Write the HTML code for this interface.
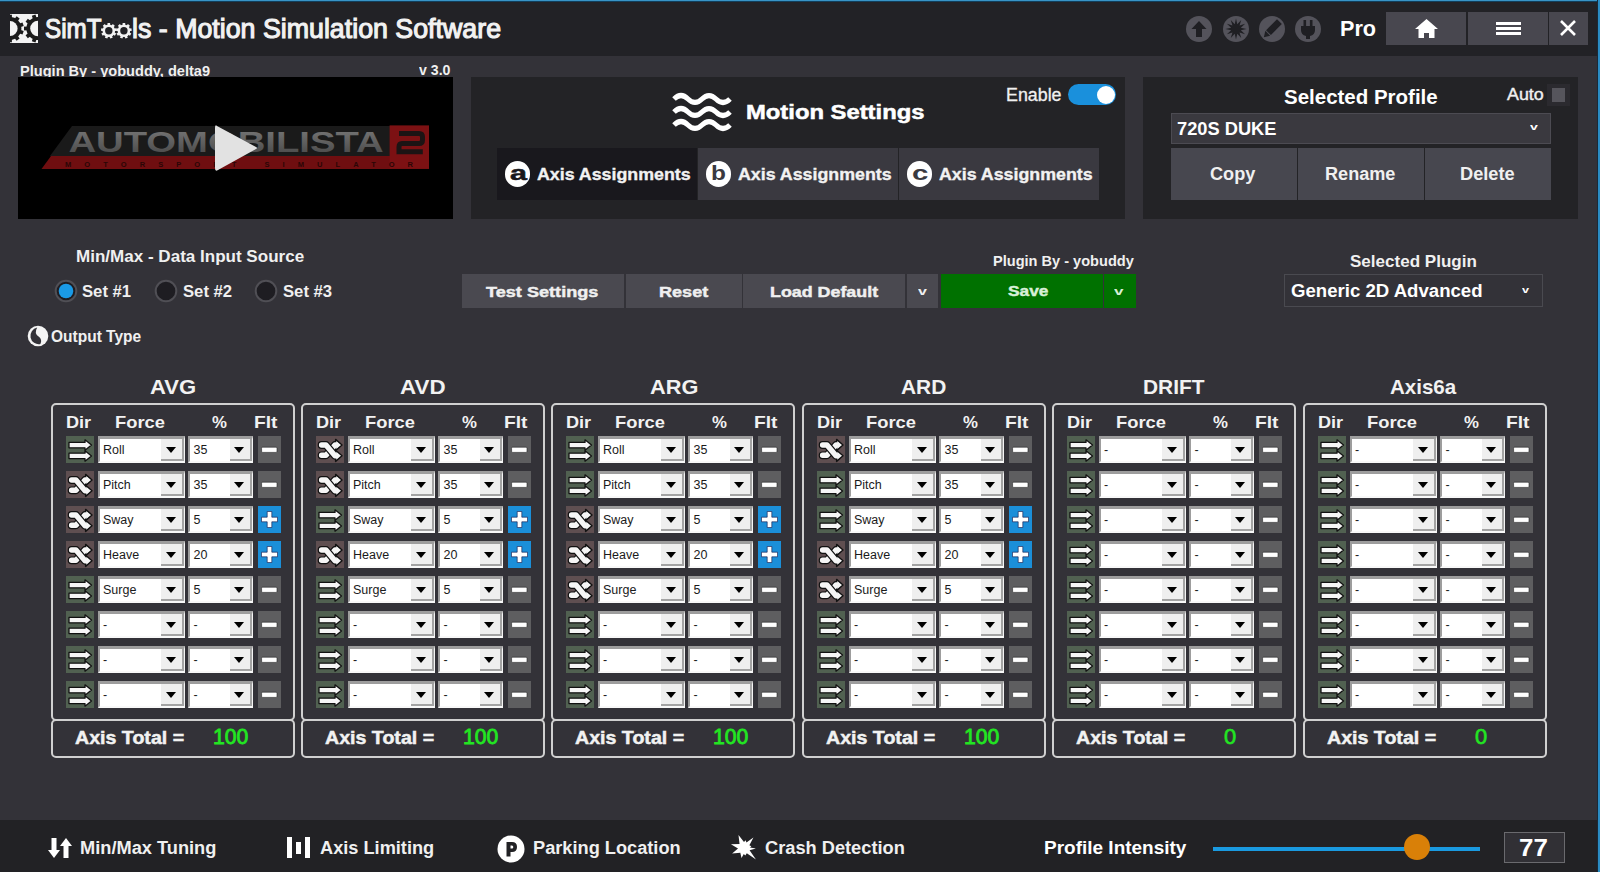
<!DOCTYPE html><html><head><meta charset="utf-8"><style>
*{margin:0;padding:0}
html,body{width:1600px;height:872px;overflow:hidden;background:#333238;font-family:"Liberation Sans", sans-serif}
.t{position:absolute;white-space:nowrap;font-family:"Liberation Sans", sans-serif}
.r{position:absolute;display:block}
.cb{position:absolute;box-sizing:border-box;background:#fff;border-top:3px solid #9d9d9d;border-left:2.5px solid #9d9d9d;border-right:1px solid #f4f4f4;border-bottom:2.5px solid #f8f8f8}
.cbt{position:absolute;left:3.5px;top:4.8px;font-size:12.5px;line-height:13px;color:#1a1a1a;font-family:"Liberation Sans", sans-serif}
.cbb{position:absolute;right:0;top:0;bottom:0;background:#efefef;border-bottom:2.5px solid #a3a3a3;border-right:2.5px solid #a3a3a3;box-sizing:border-box}
.cbb i{position:absolute;left:4.5px;top:7.5px;width:0;height:0;border-left:5px solid transparent;border-right:5px solid transparent;border-top:6px solid #000}
</style></head><body><div class="r" style="left:0px;top:0px;width:1600px;height:56px;background:#222226;"></div><div class="r" style="left:0px;top:0px;width:1600px;height:1px;background:#3894c6;"></div><div class="r" style="left:0px;top:1px;width:1600px;height:1px;background:#123f5c;"></div><svg class="r" style="left:8px;top:12px;" width="32" height="33" viewBox="0 0 32 33">
<defs><clipPath id="lc"><rect x="2" y="2" width="28" height="29"/></clipPath></defs>
<rect x="2" y="2" width="28" height="29" fill="#f4f4f4"/>
<g clip-path="url(#lc)" fill="#1c1c1c">
<circle cx="2" cy="16.5" r="11.4"/>
<circle cx="30" cy="16.5" r="11.6"/>
<g transform="translate(2 16.5)"><rect x="-1.9" y="-13.8" width="3.8" height="4" transform="rotate(0)"/><rect x="-1.9" y="-13.8" width="3.8" height="4" transform="rotate(36)"/><rect x="-1.9" y="-13.8" width="3.8" height="4" transform="rotate(72)"/><rect x="-1.9" y="-13.8" width="3.8" height="4" transform="rotate(108)"/><rect x="-1.9" y="-13.8" width="3.8" height="4" transform="rotate(144)"/><rect x="-1.9" y="-13.8" width="3.8" height="4" transform="rotate(180)"/><rect x="-1.9" y="-13.8" width="3.8" height="4" transform="rotate(216)"/><rect x="-1.9" y="-13.8" width="3.8" height="4" transform="rotate(252)"/><rect x="-1.9" y="-13.8" width="3.8" height="4" transform="rotate(288)"/><rect x="-1.9" y="-13.8" width="3.8" height="4" transform="rotate(324)"/></g>
<g transform="translate(30 16.5)"><rect x="-1.9" y="-14" width="3.8" height="4" transform="rotate(18)"/><rect x="-1.9" y="-14" width="3.8" height="4" transform="rotate(54)"/><rect x="-1.9" y="-14" width="3.8" height="4" transform="rotate(90)"/><rect x="-1.9" y="-14" width="3.8" height="4" transform="rotate(126)"/><rect x="-1.9" y="-14" width="3.8" height="4" transform="rotate(162)"/><rect x="-1.9" y="-14" width="3.8" height="4" transform="rotate(198)"/><rect x="-1.9" y="-14" width="3.8" height="4" transform="rotate(234)"/><rect x="-1.9" y="-14" width="3.8" height="4" transform="rotate(270)"/><rect x="-1.9" y="-14" width="3.8" height="4" transform="rotate(306)"/><rect x="-1.9" y="-14" width="3.8" height="4" transform="rotate(342)"/></g>
</g>
<g clip-path="url(#lc)" fill="#f4f4f4"><circle cx="2" cy="16.5" r="7.6"/><circle cx="30" cy="16.5" r="7.8"/></g>
</svg><div class="t" style="left:45.35px;top:15.64px;font-size:27px;line-height:27px;font-weight:normal;color:#f2f2f2;transform:scaleX(0.8976);transform-origin:0 0;-webkit-text-stroke:1.1px #f2f2f2;">SimT</div><div class="t" style="left:132.11px;top:15.64px;font-size:27px;line-height:27px;font-weight:normal;color:#f2f2f2;transform:scaleX(0.9916);transform-origin:0 0;-webkit-text-stroke:1.1px #f2f2f2;">ls - Motion Simulation Software</div><svg class="r" style="left:101.3px;top:23.1px;" width="31" height="16" viewBox="0 0 31 16"><g transform="translate(7.8 7.8)" fill="#f2f2f2"><rect x="-1.3" y="-7.8" width="2.6" height="3" transform="rotate(0)"/><rect x="-1.3" y="-7.8" width="2.6" height="3" transform="rotate(40)"/><rect x="-1.3" y="-7.8" width="2.6" height="3" transform="rotate(80)"/><rect x="-1.3" y="-7.8" width="2.6" height="3" transform="rotate(120)"/><rect x="-1.3" y="-7.8" width="2.6" height="3" transform="rotate(160)"/><rect x="-1.3" y="-7.8" width="2.6" height="3" transform="rotate(200)"/><rect x="-1.3" y="-7.8" width="2.6" height="3" transform="rotate(240)"/><rect x="-1.3" y="-7.8" width="2.6" height="3" transform="rotate(280)"/><rect x="-1.3" y="-7.8" width="2.6" height="3" transform="rotate(320)"/><circle r="6.3"/></g><circle cx="7.8" cy="7.8" r="3.7" fill="#222226"/><g transform="translate(22.9 7.8)" fill="#f2f2f2"><rect x="-1.3" y="-7.8" width="2.6" height="3" transform="rotate(0)"/><rect x="-1.3" y="-7.8" width="2.6" height="3" transform="rotate(40)"/><rect x="-1.3" y="-7.8" width="2.6" height="3" transform="rotate(80)"/><rect x="-1.3" y="-7.8" width="2.6" height="3" transform="rotate(120)"/><rect x="-1.3" y="-7.8" width="2.6" height="3" transform="rotate(160)"/><rect x="-1.3" y="-7.8" width="2.6" height="3" transform="rotate(200)"/><rect x="-1.3" y="-7.8" width="2.6" height="3" transform="rotate(240)"/><rect x="-1.3" y="-7.8" width="2.6" height="3" transform="rotate(280)"/><rect x="-1.3" y="-7.8" width="2.6" height="3" transform="rotate(320)"/><circle r="6.3"/></g><circle cx="22.9" cy="7.8" r="3.7" fill="#222226"/></svg><div class="r" style="left:1186px;top:15.5px;width:26px;height:26px;border-radius:50%;background:#54535b"></div><div class="r" style="left:1222.5px;top:15.5px;width:26px;height:26px;border-radius:50%;background:#54535b"></div><div class="r" style="left:1259px;top:15.5px;width:26px;height:26px;border-radius:50%;background:#54535b"></div><div class="r" style="left:1295px;top:15.5px;width:26px;height:26px;border-radius:50%;background:#54535b"></div><svg class="r" style="left:1186px;top:15.5px;" width="26" height="26" viewBox="0 0 26 26"><path d="M13 5 L20.5 13 L16 13 L16 21 L10 21 L10 13 L5.5 13 Z" fill="#1f1f23"/></svg><svg class="r" style="left:1222.5px;top:15.5px;" width="26" height="26" viewBox="0 0 26 26"><polygon points="23.50,13.00 17.83,14.29 22.09,18.25 16.54,16.54 18.25,22.09 14.29,17.83 13.00,23.50 11.71,17.83 7.75,22.09 9.46,16.54 3.91,18.25 8.17,14.29 2.50,13.00 8.17,11.71 3.91,7.75 9.46,9.46 7.75,3.91 11.71,8.17 13.00,2.50 14.29,8.17 18.25,3.91 16.54,9.46 22.09,7.75 17.83,11.71" fill="#1f1f23"/></svg><svg class="r" style="left:1259px;top:15.5px;" width="26" height="26" viewBox="0 0 26 26"><g transform="rotate(45 13 13)" fill="#1f1f23"><rect x="9.6" y="2.5" width="6.8" height="15.5"/><path d="M9.6 19 L16.4 19 L13 24.5 Z"/></g></svg><svg class="r" style="left:1295px;top:15.5px;" width="26" height="26" viewBox="0 0 26 26"><rect x="8.5" y="4" width="2.6" height="6" fill="#1f1f23"/><rect x="14.9" y="4" width="2.6" height="6" fill="#1f1f23"/><path d="M6 10 H20 V14 Q20 19 15 20 V23 H11 V20 Q6 19 6 14 Z" fill="#1f1f23"/></svg><div class="t" style="left:1339.62px;top:17.98px;font-size:22px;line-height:22px;font-weight:bold;color:#fff;transform:scaleX(0.9829);transform-origin:0 0;">Pro</div><div class="r" style="left:1386px;top:12px;width:80px;height:33px;background:#48474f;"></div><div class="r" style="left:1468px;top:12px;width:80px;height:33px;background:#48474f;"></div><div class="r" style="left:1549px;top:12px;width:39px;height:33px;background:#48474f;"></div><svg class="r" style="left:1414px;top:18px;" width="25" height="21" viewBox="0 0 25 21"><path d="M12.5 1 L24 11 L20.5 11 L20.5 20 L15 20 L15 15 L10 15 L10 20 L4.5 20 L4.5 11 L1 11 Z" fill="#fff"/></svg><div class="r" style="left:1496px;top:22px;width:25px;height:3px;background:#fff;"></div><div class="r" style="left:1496px;top:27px;width:25px;height:3px;background:#fff;"></div><div class="r" style="left:1496px;top:32px;width:25px;height:3px;background:#fff;"></div><svg class="r" style="left:1558px;top:18px;" width="20" height="20" viewBox="0 0 20 20"><path d="M3 3 L17 17 M17 3 L3 17" stroke="#fff" stroke-width="2.6"/></svg><div class="r" style="left:0px;top:56px;width:1600px;height:764px;background:#333238;"></div><div class="t" style="left:20.46px;top:63.65px;font-size:14px;line-height:14px;font-weight:bold;color:#f0f0f0;transform:scaleX(1.0414);transform-origin:0 0;">Plugin By - yobuddy, delta9</div><div class="t" style="left:419.00px;top:63.45px;font-size:14px;line-height:14px;font-weight:bold;color:#f0f0f0;transform:scaleX(1.0097);transform-origin:0 0;">v 3.0</div><div class="r" style="left:18px;top:76.5px;width:435px;height:142.5px;background:#000;"></div><svg class="r" style="left:38px;top:122px;" width="395" height="52" viewBox="0 0 395 52">
<defs><linearGradient id="lg" x1="0" y1="0" x2="0" y2="1"><stop offset="0" stop-color="#7a7a7a"/><stop offset="1" stop-color="#454545"/></linearGradient></defs>
<path d="M34 4 L352 4 L352 34 L12 34 Z" fill="#1a1a1a"/>
<path d="M13 34 L391 34 L391 47 L3.5 47 Z" fill="#6f0e10"/>
<rect x="351.6" y="3.4" width="39.4" height="43.2" fill="#7c1113"/>
<path d="M361 11.5 H381 Q384.5 11.5 384.5 15 V18 Q384.5 21.5 381 21.5 H364 Q361 21.5 361 25 V29.8 H384.8" fill="none" stroke="#1c1414" stroke-width="5"/>
<text x="30.4" y="30.3" font-family="Liberation Sans" font-weight="bold" font-size="29.5" fill="url(#lg)" textLength="315.3" lengthAdjust="spacingAndGlyphs">AUTOMOBILISTA</text>
<text x="27" y="44.5" font-family="Liberation Sans" font-weight="bold" font-size="7.5" fill="#2a0606" textLength="348" lengthAdjust="spacing">MOTORSPORT  SIMULATOR</text>
</svg><svg class="r" style="left:212px;top:122px;" width="48" height="52" viewBox="0 0 48 52"><path d="M5 4 Q3 2 3 6 L3 46 Q3 50 6 48 L44 27 Q46 26 44 25 Z" fill="#e2e2e2"/></svg><div class="r" style="left:471px;top:76.5px;width:654px;height:142.5px;background:#232326;"></div><svg class="r" style="left:671px;top:92px;overflow:visible" width="60" height="40" viewBox="0 0 60 40"><path d="M3 7 q7 -7 14 0 t14 0 t14 0 t14 0" fill="none" stroke="#fff" stroke-width="5"/><path d="M3 20 q7 -7 14 0 t14 0 t14 0 t14 0" fill="none" stroke="#fff" stroke-width="5"/><path d="M3 33 q7 -7 14 0 t14 0 t14 0 t14 0" fill="none" stroke="#fff" stroke-width="5"/></svg><div class="t" style="left:745.81px;top:101.97px;font-size:20px;line-height:20px;font-weight:bold;color:#fff;transform:scaleX(1.1899);transform-origin:0 0;-webkit-text-stroke:0.5px #fff;">Motion Settings</div><div class="t" style="left:1005.78px;top:87.19px;font-size:17.5px;line-height:17.5px;font-weight:normal;color:#f0f0f0;transform:scaleX(1.0189);transform-origin:0 0;-webkit-text-stroke:0.3px #f0f0f0;">Enable</div><div class="r" style="left:1067.5px;top:84px;width:48.5px;height:21px;background:#1a90dc;border-radius:11px;"></div><div class="r" style="left:1096.5px;top:85.7px;width:18px;height:18px;background:#fff;border-radius:50%;"></div><div class="r" style="left:497px;top:148px;width:200px;height:51.5px;background:#19181d;"></div><div class="r" style="left:698px;top:148px;width:200px;height:51.5px;background:#3a3940;"></div><div class="r" style="left:899px;top:148px;width:200px;height:51.5px;background:#3a3940;"></div><div class="r" style="left:504.90000000000003px;top:161.2px;width:25.6px;height:25.6px;border-radius:50%;background:#fff"></div><div class="t" style="left:509.55px;top:162.02px;font-size:21px;line-height:21px;font-weight:bold;color:#19181d;transform:scaleX(1.4500);transform-origin:0 0;-webkit-text-stroke:0.5px #19181d;">a</div><div class="t" style="left:536.70px;top:165.81px;font-size:17px;line-height:17px;font-weight:bold;color:#f2f2f2;transform:scaleX(1.0466);transform-origin:0 0;-webkit-text-stroke:0.35px #f2f2f2;">Axis Assignments</div><div class="r" style="left:705.9000000000001px;top:161.2px;width:25.6px;height:25.6px;border-radius:50%;background:#fff"></div><div class="t" style="left:711.41px;top:163.35px;font-size:20.5px;line-height:20.5px;font-weight:bold;color:#3a3940;transform:scaleX(1.1909);transform-origin:0 0;">b</div><div class="t" style="left:737.70px;top:165.81px;font-size:17px;line-height:17px;font-weight:bold;color:#f2f2f2;transform:scaleX(1.0466);transform-origin:0 0;-webkit-text-stroke:0.35px #f2f2f2;">Axis Assignments</div><div class="r" style="left:906.9000000000001px;top:161.2px;width:25.6px;height:25.6px;border-radius:50%;background:#fff"></div><div class="t" style="left:911.90px;top:162.02px;font-size:21px;line-height:21px;font-weight:bold;color:#3a3940;transform:scaleX(1.4000);transform-origin:0 0;">c</div><div class="t" style="left:938.70px;top:165.81px;font-size:17px;line-height:17px;font-weight:bold;color:#f2f2f2;transform:scaleX(1.0466);transform-origin:0 0;-webkit-text-stroke:0.35px #f2f2f2;">Axis Assignments</div><div class="r" style="left:1143px;top:77px;width:435px;height:141.5px;background:#232326;"></div><div class="t" style="left:1284.10px;top:87.45px;font-size:20.5px;line-height:20.5px;font-weight:bold;color:#fff;transform:scaleX(0.9993);transform-origin:0 0;">Selected Profile</div><div class="t" style="left:1506.80px;top:86.76px;font-size:16px;line-height:16px;font-weight:normal;color:#f0f0f0;transform:scaleX(1.1152);transform-origin:0 0;-webkit-text-stroke:0.4px #f0f0f0;">Auto</div><div class="r" style="left:1547px;top:83.5px;width:22.5px;height:22.5px;background:#2b2a2f;"></div><div class="r" style="left:1552px;top:88px;width:13px;height:13.5px;background:#56555c;"></div><div class="r" style="left:1170.5px;top:113px;width:380.5px;height:30.5px;background:#3a393f;box-sizing:border-box;border:1px solid #4c4b52;"></div><div class="t" style="left:1177.49px;top:119.66px;font-size:18px;line-height:18px;font-weight:bold;color:#fff;transform:scaleX(1.0144);transform-origin:0 0;">720S DUKE</div><div class="t" style="left:1529.60px;top:123.18px;font-size:9px;line-height:9px;font-weight:bold;color:#fff;transform:scaleX(1.5600);transform-origin:0 0;">v</div><div class="r" style="left:1170.5px;top:148px;width:126px;height:51.5px;background:#47474f;"></div><div class="r" style="left:1298px;top:148px;width:125.5px;height:51.5px;background:#47474f;"></div><div class="r" style="left:1425px;top:148px;width:126px;height:51.5px;background:#47474f;"></div><div class="t" style="left:1209.99px;top:165.06px;font-size:18px;line-height:18px;font-weight:bold;color:#f0f0f0;transform:scaleX(1.0068);transform-origin:0 0;">Copy</div><div class="t" style="left:1324.99px;top:165.06px;font-size:18px;line-height:18px;font-weight:bold;color:#f0f0f0;transform:scaleX(1.0058);transform-origin:0 0;">Rename</div><div class="t" style="left:1459.79px;top:165.06px;font-size:18px;line-height:18px;font-weight:bold;color:#f0f0f0;transform:scaleX(1.0113);transform-origin:0 0;">Delete</div><div class="t" style="left:75.54px;top:249.36px;font-size:16px;line-height:16px;font-weight:bold;color:#f0f0f0;transform:scaleX(1.0648);transform-origin:0 0;">Min/Max - Data Input Source</div><svg class="r" style="left:54px;top:278.5px;" width="24" height="24" viewBox="0 0 24 24"><circle cx="12" cy="12" r="10.3" fill="#1e1d22" stroke="#504f55" stroke-width="2"/><circle cx="12" cy="12" r="7.3" fill="#1a9ae6"/></svg><div class="t" style="left:82.49px;top:282.83px;font-size:16.5px;line-height:16.5px;font-weight:bold;color:#f0f0f0;transform:scaleX(1.0106);transform-origin:0 0;">Set #1</div><svg class="r" style="left:153.5px;top:278.5px;" width="24" height="24" viewBox="0 0 24 24"><circle cx="12" cy="12" r="10.3" fill="#1e1d22" stroke="#504f55" stroke-width="2"/></svg><div class="t" style="left:182.89px;top:282.83px;font-size:16.5px;line-height:16.5px;font-weight:bold;color:#f0f0f0;transform:scaleX(1.0106);transform-origin:0 0;">Set #2</div><svg class="r" style="left:253.7px;top:278.5px;" width="24" height="24" viewBox="0 0 24 24"><circle cx="12" cy="12" r="10.3" fill="#1e1d22" stroke="#504f55" stroke-width="2"/></svg><div class="t" style="left:283.24px;top:282.83px;font-size:16.5px;line-height:16.5px;font-weight:bold;color:#f0f0f0;transform:scaleX(1.0106);transform-origin:0 0;">Set #3</div><svg class="r" style="left:26.6px;top:325.1px;" width="22" height="22" viewBox="0 0 22 22"><circle cx="11" cy="11" r="10.3" fill="#f4f4f4"/><path d="M10.2 2.6 A8.4 8.4 0 0 0 13.4 19.1 Q15.6 14.6 11.6 11.6 Q6.8 8.6 10.2 2.6 Z" fill="#333238"/></svg><div class="t" style="left:50.78px;top:329.16px;font-size:16px;line-height:16px;font-weight:bold;color:#f0f0f0;transform:scaleX(0.9690);transform-origin:0 0;">Output Type</div><div class="r" style="left:462px;top:274px;width:162px;height:33.5px;background:#4a4950;"></div><div class="r" style="left:625.5px;top:274px;width:116.5px;height:33.5px;background:#4a4950;"></div><div class="r" style="left:743px;top:274px;width:162px;height:33.5px;background:#4a4950;"></div><div class="r" style="left:907px;top:274px;width:31px;height:33.5px;background:#4a4950;"></div><div class="r" style="left:941px;top:274px;width:161.5px;height:33.5px;background:#007100;"></div><div class="r" style="left:1104px;top:274px;width:31.5px;height:33.5px;background:#007100;"></div><div class="t" style="left:486.25px;top:283.68px;font-size:15.5px;line-height:15.5px;font-weight:bold;color:#f0f0f0;transform:scaleX(1.1682);transform-origin:0 0;-webkit-text-stroke:0.45px #f0f0f0;">Test Settings</div><div class="t" style="left:658.53px;top:283.68px;font-size:15.5px;line-height:15.5px;font-weight:bold;color:#f0f0f0;transform:scaleX(1.1659);transform-origin:0 0;-webkit-text-stroke:0.45px #f0f0f0;">Reset</div><div class="t" style="left:769.85px;top:283.68px;font-size:15.5px;line-height:15.5px;font-weight:bold;color:#f0f0f0;transform:scaleX(1.1516);transform-origin:0 0;-webkit-text-stroke:0.45px #f0f0f0;">Load Default</div><div class="t" style="left:917.50px;top:285.69px;font-size:11px;line-height:11px;font-weight:bold;color:#f0f0f0;transform:scaleX(1.4583);transform-origin:0 0;">v</div><div class="t" style="left:1007.80px;top:283.38px;font-size:15.5px;line-height:15.5px;font-weight:bold;color:#d8f0d8;transform:scaleX(1.1167);transform-origin:0 0;-webkit-text-stroke:0.45px #d8f0d8;">Save</div><div class="t" style="left:1114.20px;top:285.69px;font-size:11px;line-height:11px;font-weight:bold;color:#d8f0d8;transform:scaleX(1.5500);transform-origin:0 0;">v</div><div class="t" style="left:993.46px;top:253.75px;font-size:14px;line-height:14px;font-weight:bold;color:#f0f0f0;transform:scaleX(1.0403);transform-origin:0 0;">Plugin By - yobuddy</div><div class="t" style="left:1350.37px;top:253.23px;font-size:16.5px;line-height:16.5px;font-weight:bold;color:#f0f0f0;transform:scaleX(1.0322);transform-origin:0 0;">Selected Plugin</div><div class="r" style="left:1284px;top:274px;width:258.5px;height:33px;background:transparent;box-sizing:border-box;border:1px solid #4a4a50;"></div><div class="t" style="left:1290.87px;top:281.76px;font-size:18px;line-height:18px;font-weight:bold;color:#fff;transform:scaleX(1.0332);transform-origin:0 0;">Generic 2D Advanced</div><div class="t" style="left:1522.40px;top:285.88px;font-size:9px;line-height:9px;font-weight:bold;color:#fff;transform:scaleX(1.4000);transform-origin:0 0;">v</div><div class="t" style="left:149.72px;top:376.95px;font-size:20.5px;line-height:20.5px;font-weight:bold;color:#f2f2f2;transform:scaleX(1.0756);transform-origin:0 0;">AVG</div><div class="r" style="left:51px;top:402.5px;width:244px;height:318px;background:transparent;box-sizing:border-box;border:2px solid #d0d0d0;border-radius:5px;"></div><div class="t" style="left:66.03px;top:414.01px;font-size:17px;line-height:17px;font-weight:bold;color:#f2f2f2;transform:scaleX(1.0652);transform-origin:0 0;">Dir</div><div class="t" style="left:115.42px;top:414.01px;font-size:17px;line-height:17px;font-weight:bold;color:#f2f2f2;transform:scaleX(1.0778);transform-origin:0 0;">Force</div><div class="t" style="left:212.00px;top:414.01px;font-size:17px;line-height:17px;font-weight:bold;color:#f2f2f2;transform:scaleX(0.9867);transform-origin:0 0;">%</div><div class="t" style="left:254.47px;top:414.01px;font-size:17px;line-height:17px;font-weight:bold;color:#f2f2f2;transform:scaleX(1.1300);transform-origin:0 0;">Flt</div><div class="r" style="left:66px;top:436px;width:28px;height:27px;background:#516151;"></div><svg class="r" style="left:66px;top:436px;" width="28" height="27" viewBox="0 0 28 27"><path d="M3 6.3999999999999995 H19 V3.8499999999999996 L25.5 9.1 L19 14.35 V11.8 H3 Z M3 17.2 H19 V14.649999999999999 L25.5 19.9 L19 25.15 V22.599999999999998 H3 Z" fill="#f6f6f6" stroke="#111" stroke-width="1.3" stroke-linejoin="round"/></svg><div class="cb" style="left:97.5px;top:436px;width:87px;height:27px"><div class="cbt">Roll</div><div class="cbb" style="width:22.5px"><i></i></div></div><div class="cb" style="left:188px;top:436px;width:65px;height:27px"><div class="cbt">35</div><div class="cbb" style="width:22.5px"><i></i></div></div><div class="r" style="left:258px;top:436px;width:22.5px;height:27px;background:#5e5e60;"></div><svg class="r" style="left:258px;top:436px;" width="23" height="27" viewBox="0 0 23 27"><rect x="3.6" y="11.2" width="15.4" height="5.2" rx="1" fill="#fff" stroke="#222" stroke-width="0.6"/></svg><div class="r" style="left:66px;top:471px;width:28px;height:27px;background:#5f4f51;"></div><svg class="r" style="left:66px;top:471px;" width="28" height="27" viewBox="0 0 28 27"><g stroke-linejoin="round"><path d="M5.6 19.3 H10 L19 9.0 H20" fill="none" stroke="#111" stroke-width="7.8" stroke-linecap="round"/><path d="M19.6 3.4000000000000004 L26 9.0 L19.6 14.6 Z" fill="#f6f6f6" stroke="#111" stroke-width="1.4"/><path d="M5.6 19.3 H10 L19 9.0 H20" fill="none" stroke="#f6f6f6" stroke-width="5.4" stroke-linecap="round"/><path d="M5.6 9.0 H10 L19 19.8 H20" fill="none" stroke="#111" stroke-width="7.8" stroke-linecap="round"/><path d="M19.6 14.200000000000001 L26 19.8 L19.6 25.4 Z" fill="#f6f6f6" stroke="#111" stroke-width="1.4"/><path d="M5.6 9.0 H10 L19 19.8 H20" fill="none" stroke="#f6f6f6" stroke-width="5.4" stroke-linecap="round"/></g></svg><div class="cb" style="left:97.5px;top:471px;width:87px;height:27px"><div class="cbt">Pitch</div><div class="cbb" style="width:22.5px"><i></i></div></div><div class="cb" style="left:188px;top:471px;width:65px;height:27px"><div class="cbt">35</div><div class="cbb" style="width:22.5px"><i></i></div></div><div class="r" style="left:258px;top:471px;width:22.5px;height:27px;background:#5e5e60;"></div><svg class="r" style="left:258px;top:471px;" width="23" height="27" viewBox="0 0 23 27"><rect x="3.6" y="11.2" width="15.4" height="5.2" rx="1" fill="#fff" stroke="#222" stroke-width="0.6"/></svg><div class="r" style="left:66px;top:506px;width:28px;height:27px;background:#5f4f51;"></div><svg class="r" style="left:66px;top:506px;" width="28" height="27" viewBox="0 0 28 27"><g stroke-linejoin="round"><path d="M5.6 19.3 H10 L19 9.0 H20" fill="none" stroke="#111" stroke-width="7.8" stroke-linecap="round"/><path d="M19.6 3.4000000000000004 L26 9.0 L19.6 14.6 Z" fill="#f6f6f6" stroke="#111" stroke-width="1.4"/><path d="M5.6 19.3 H10 L19 9.0 H20" fill="none" stroke="#f6f6f6" stroke-width="5.4" stroke-linecap="round"/><path d="M5.6 9.0 H10 L19 19.8 H20" fill="none" stroke="#111" stroke-width="7.8" stroke-linecap="round"/><path d="M19.6 14.200000000000001 L26 19.8 L19.6 25.4 Z" fill="#f6f6f6" stroke="#111" stroke-width="1.4"/><path d="M5.6 9.0 H10 L19 19.8 H20" fill="none" stroke="#f6f6f6" stroke-width="5.4" stroke-linecap="round"/></g></svg><div class="cb" style="left:97.5px;top:506px;width:87px;height:27px"><div class="cbt">Sway</div><div class="cbb" style="width:22.5px"><i></i></div></div><div class="cb" style="left:188px;top:506px;width:65px;height:27px"><div class="cbt">5</div><div class="cbb" style="width:22.5px"><i></i></div></div><div class="r" style="left:258px;top:506px;width:22.5px;height:27px;background:#1b8fd9;"></div><svg class="r" style="left:258px;top:506px;" width="23" height="27" viewBox="0 0 23 27"><path d="M9.2 5.5 H13.8 V11.2 H19.5 V15.8 H13.8 V21.5 H9.2 V15.8 H3.5 V11.2 H9.2 Z" fill="#fff" stroke="#114" stroke-width="0.6"/></svg><div class="r" style="left:66px;top:541px;width:28px;height:27px;background:#5f4f51;"></div><svg class="r" style="left:66px;top:541px;" width="28" height="27" viewBox="0 0 28 27"><g stroke-linejoin="round"><path d="M5.6 19.3 H10 L19 9.0 H20" fill="none" stroke="#111" stroke-width="7.8" stroke-linecap="round"/><path d="M19.6 3.4000000000000004 L26 9.0 L19.6 14.6 Z" fill="#f6f6f6" stroke="#111" stroke-width="1.4"/><path d="M5.6 19.3 H10 L19 9.0 H20" fill="none" stroke="#f6f6f6" stroke-width="5.4" stroke-linecap="round"/><path d="M5.6 9.0 H10 L19 19.8 H20" fill="none" stroke="#111" stroke-width="7.8" stroke-linecap="round"/><path d="M19.6 14.200000000000001 L26 19.8 L19.6 25.4 Z" fill="#f6f6f6" stroke="#111" stroke-width="1.4"/><path d="M5.6 9.0 H10 L19 19.8 H20" fill="none" stroke="#f6f6f6" stroke-width="5.4" stroke-linecap="round"/></g></svg><div class="cb" style="left:97.5px;top:541px;width:87px;height:27px"><div class="cbt">Heave</div><div class="cbb" style="width:22.5px"><i></i></div></div><div class="cb" style="left:188px;top:541px;width:65px;height:27px"><div class="cbt">20</div><div class="cbb" style="width:22.5px"><i></i></div></div><div class="r" style="left:258px;top:541px;width:22.5px;height:27px;background:#1b8fd9;"></div><svg class="r" style="left:258px;top:541px;" width="23" height="27" viewBox="0 0 23 27"><path d="M9.2 5.5 H13.8 V11.2 H19.5 V15.8 H13.8 V21.5 H9.2 V15.8 H3.5 V11.2 H9.2 Z" fill="#fff" stroke="#114" stroke-width="0.6"/></svg><div class="r" style="left:66px;top:576px;width:28px;height:27px;background:#516151;"></div><svg class="r" style="left:66px;top:576px;" width="28" height="27" viewBox="0 0 28 27"><path d="M3 6.3999999999999995 H19 V3.8499999999999996 L25.5 9.1 L19 14.35 V11.8 H3 Z M3 17.2 H19 V14.649999999999999 L25.5 19.9 L19 25.15 V22.599999999999998 H3 Z" fill="#f6f6f6" stroke="#111" stroke-width="1.3" stroke-linejoin="round"/></svg><div class="cb" style="left:97.5px;top:576px;width:87px;height:27px"><div class="cbt">Surge</div><div class="cbb" style="width:22.5px"><i></i></div></div><div class="cb" style="left:188px;top:576px;width:65px;height:27px"><div class="cbt">5</div><div class="cbb" style="width:22.5px"><i></i></div></div><div class="r" style="left:258px;top:576px;width:22.5px;height:27px;background:#5e5e60;"></div><svg class="r" style="left:258px;top:576px;" width="23" height="27" viewBox="0 0 23 27"><rect x="3.6" y="11.2" width="15.4" height="5.2" rx="1" fill="#fff" stroke="#222" stroke-width="0.6"/></svg><div class="r" style="left:66px;top:611px;width:28px;height:27px;background:#516151;"></div><svg class="r" style="left:66px;top:611px;" width="28" height="27" viewBox="0 0 28 27"><path d="M3 6.3999999999999995 H19 V3.8499999999999996 L25.5 9.1 L19 14.35 V11.8 H3 Z M3 17.2 H19 V14.649999999999999 L25.5 19.9 L19 25.15 V22.599999999999998 H3 Z" fill="#f6f6f6" stroke="#111" stroke-width="1.3" stroke-linejoin="round"/></svg><div class="cb" style="left:97.5px;top:611px;width:87px;height:27px"><div class="cbt">-</div><div class="cbb" style="width:22.5px"><i></i></div></div><div class="cb" style="left:188px;top:611px;width:65px;height:27px"><div class="cbt">-</div><div class="cbb" style="width:22.5px"><i></i></div></div><div class="r" style="left:258px;top:611px;width:22.5px;height:27px;background:#5e5e60;"></div><svg class="r" style="left:258px;top:611px;" width="23" height="27" viewBox="0 0 23 27"><rect x="3.6" y="11.2" width="15.4" height="5.2" rx="1" fill="#fff" stroke="#222" stroke-width="0.6"/></svg><div class="r" style="left:66px;top:646px;width:28px;height:27px;background:#516151;"></div><svg class="r" style="left:66px;top:646px;" width="28" height="27" viewBox="0 0 28 27"><path d="M3 6.3999999999999995 H19 V3.8499999999999996 L25.5 9.1 L19 14.35 V11.8 H3 Z M3 17.2 H19 V14.649999999999999 L25.5 19.9 L19 25.15 V22.599999999999998 H3 Z" fill="#f6f6f6" stroke="#111" stroke-width="1.3" stroke-linejoin="round"/></svg><div class="cb" style="left:97.5px;top:646px;width:87px;height:27px"><div class="cbt">-</div><div class="cbb" style="width:22.5px"><i></i></div></div><div class="cb" style="left:188px;top:646px;width:65px;height:27px"><div class="cbt">-</div><div class="cbb" style="width:22.5px"><i></i></div></div><div class="r" style="left:258px;top:646px;width:22.5px;height:27px;background:#5e5e60;"></div><svg class="r" style="left:258px;top:646px;" width="23" height="27" viewBox="0 0 23 27"><rect x="3.6" y="11.2" width="15.4" height="5.2" rx="1" fill="#fff" stroke="#222" stroke-width="0.6"/></svg><div class="r" style="left:66px;top:681px;width:28px;height:27px;background:#516151;"></div><svg class="r" style="left:66px;top:681px;" width="28" height="27" viewBox="0 0 28 27"><path d="M3 6.3999999999999995 H19 V3.8499999999999996 L25.5 9.1 L19 14.35 V11.8 H3 Z M3 17.2 H19 V14.649999999999999 L25.5 19.9 L19 25.15 V22.599999999999998 H3 Z" fill="#f6f6f6" stroke="#111" stroke-width="1.3" stroke-linejoin="round"/></svg><div class="cb" style="left:97.5px;top:681px;width:87px;height:27px"><div class="cbt">-</div><div class="cbb" style="width:22.5px"><i></i></div></div><div class="cb" style="left:188px;top:681px;width:65px;height:27px"><div class="cbt">-</div><div class="cbb" style="width:22.5px"><i></i></div></div><div class="r" style="left:258px;top:681px;width:22.5px;height:27px;background:#5e5e60;"></div><svg class="r" style="left:258px;top:681px;" width="23" height="27" viewBox="0 0 23 27"><rect x="3.6" y="11.2" width="15.4" height="5.2" rx="1" fill="#fff" stroke="#222" stroke-width="0.6"/></svg><div class="r" style="left:51px;top:718.5px;width:244px;height:39.5px;background:transparent;box-sizing:border-box;border:2px solid #d0d0d0;border-radius:5px;"></div><div class="t" style="left:74.60px;top:730.19px;font-size:17.5px;line-height:17.5px;font-weight:bold;color:#f2f2f2;transform:scaleX(1.1206);transform-origin:0 0;-webkit-text-stroke:0.45px #f2f2f2;">Axis Total =</div><div class="t" style="left:212.64px;top:726.28px;font-size:22px;line-height:22px;font-weight:normal;color:#22e622;transform:scaleX(0.9629);transform-origin:0 0;-webkit-text-stroke:0.8px #22e622;">100</div><div class="t" style="left:399.71px;top:376.95px;font-size:20.5px;line-height:20.5px;font-weight:bold;color:#f2f2f2;transform:scaleX(1.0900);transform-origin:0 0;">AVD</div><div class="r" style="left:301px;top:402.5px;width:244px;height:318px;background:transparent;box-sizing:border-box;border:2px solid #d0d0d0;border-radius:5px;"></div><div class="t" style="left:316.03px;top:414.01px;font-size:17px;line-height:17px;font-weight:bold;color:#f2f2f2;transform:scaleX(1.0652);transform-origin:0 0;">Dir</div><div class="t" style="left:365.42px;top:414.01px;font-size:17px;line-height:17px;font-weight:bold;color:#f2f2f2;transform:scaleX(1.0778);transform-origin:0 0;">Force</div><div class="t" style="left:462.00px;top:414.01px;font-size:17px;line-height:17px;font-weight:bold;color:#f2f2f2;transform:scaleX(0.9867);transform-origin:0 0;">%</div><div class="t" style="left:504.47px;top:414.01px;font-size:17px;line-height:17px;font-weight:bold;color:#f2f2f2;transform:scaleX(1.1300);transform-origin:0 0;">Flt</div><div class="r" style="left:316px;top:436px;width:28px;height:27px;background:#5f4f51;"></div><svg class="r" style="left:316px;top:436px;" width="28" height="27" viewBox="0 0 28 27"><g stroke-linejoin="round"><path d="M5.6 19.3 H10 L19 9.0 H20" fill="none" stroke="#111" stroke-width="7.8" stroke-linecap="round"/><path d="M19.6 3.4000000000000004 L26 9.0 L19.6 14.6 Z" fill="#f6f6f6" stroke="#111" stroke-width="1.4"/><path d="M5.6 19.3 H10 L19 9.0 H20" fill="none" stroke="#f6f6f6" stroke-width="5.4" stroke-linecap="round"/><path d="M5.6 9.0 H10 L19 19.8 H20" fill="none" stroke="#111" stroke-width="7.8" stroke-linecap="round"/><path d="M19.6 14.200000000000001 L26 19.8 L19.6 25.4 Z" fill="#f6f6f6" stroke="#111" stroke-width="1.4"/><path d="M5.6 9.0 H10 L19 19.8 H20" fill="none" stroke="#f6f6f6" stroke-width="5.4" stroke-linecap="round"/></g></svg><div class="cb" style="left:347.5px;top:436px;width:87px;height:27px"><div class="cbt">Roll</div><div class="cbb" style="width:22.5px"><i></i></div></div><div class="cb" style="left:438px;top:436px;width:65px;height:27px"><div class="cbt">35</div><div class="cbb" style="width:22.5px"><i></i></div></div><div class="r" style="left:508px;top:436px;width:22.5px;height:27px;background:#5e5e60;"></div><svg class="r" style="left:508px;top:436px;" width="23" height="27" viewBox="0 0 23 27"><rect x="3.6" y="11.2" width="15.4" height="5.2" rx="1" fill="#fff" stroke="#222" stroke-width="0.6"/></svg><div class="r" style="left:316px;top:471px;width:28px;height:27px;background:#5f4f51;"></div><svg class="r" style="left:316px;top:471px;" width="28" height="27" viewBox="0 0 28 27"><g stroke-linejoin="round"><path d="M5.6 19.3 H10 L19 9.0 H20" fill="none" stroke="#111" stroke-width="7.8" stroke-linecap="round"/><path d="M19.6 3.4000000000000004 L26 9.0 L19.6 14.6 Z" fill="#f6f6f6" stroke="#111" stroke-width="1.4"/><path d="M5.6 19.3 H10 L19 9.0 H20" fill="none" stroke="#f6f6f6" stroke-width="5.4" stroke-linecap="round"/><path d="M5.6 9.0 H10 L19 19.8 H20" fill="none" stroke="#111" stroke-width="7.8" stroke-linecap="round"/><path d="M19.6 14.200000000000001 L26 19.8 L19.6 25.4 Z" fill="#f6f6f6" stroke="#111" stroke-width="1.4"/><path d="M5.6 9.0 H10 L19 19.8 H20" fill="none" stroke="#f6f6f6" stroke-width="5.4" stroke-linecap="round"/></g></svg><div class="cb" style="left:347.5px;top:471px;width:87px;height:27px"><div class="cbt">Pitch</div><div class="cbb" style="width:22.5px"><i></i></div></div><div class="cb" style="left:438px;top:471px;width:65px;height:27px"><div class="cbt">35</div><div class="cbb" style="width:22.5px"><i></i></div></div><div class="r" style="left:508px;top:471px;width:22.5px;height:27px;background:#5e5e60;"></div><svg class="r" style="left:508px;top:471px;" width="23" height="27" viewBox="0 0 23 27"><rect x="3.6" y="11.2" width="15.4" height="5.2" rx="1" fill="#fff" stroke="#222" stroke-width="0.6"/></svg><div class="r" style="left:316px;top:506px;width:28px;height:27px;background:#516151;"></div><svg class="r" style="left:316px;top:506px;" width="28" height="27" viewBox="0 0 28 27"><path d="M3 6.3999999999999995 H19 V3.8499999999999996 L25.5 9.1 L19 14.35 V11.8 H3 Z M3 17.2 H19 V14.649999999999999 L25.5 19.9 L19 25.15 V22.599999999999998 H3 Z" fill="#f6f6f6" stroke="#111" stroke-width="1.3" stroke-linejoin="round"/></svg><div class="cb" style="left:347.5px;top:506px;width:87px;height:27px"><div class="cbt">Sway</div><div class="cbb" style="width:22.5px"><i></i></div></div><div class="cb" style="left:438px;top:506px;width:65px;height:27px"><div class="cbt">5</div><div class="cbb" style="width:22.5px"><i></i></div></div><div class="r" style="left:508px;top:506px;width:22.5px;height:27px;background:#1b8fd9;"></div><svg class="r" style="left:508px;top:506px;" width="23" height="27" viewBox="0 0 23 27"><path d="M9.2 5.5 H13.8 V11.2 H19.5 V15.8 H13.8 V21.5 H9.2 V15.8 H3.5 V11.2 H9.2 Z" fill="#fff" stroke="#114" stroke-width="0.6"/></svg><div class="r" style="left:316px;top:541px;width:28px;height:27px;background:#5f4f51;"></div><svg class="r" style="left:316px;top:541px;" width="28" height="27" viewBox="0 0 28 27"><g stroke-linejoin="round"><path d="M5.6 19.3 H10 L19 9.0 H20" fill="none" stroke="#111" stroke-width="7.8" stroke-linecap="round"/><path d="M19.6 3.4000000000000004 L26 9.0 L19.6 14.6 Z" fill="#f6f6f6" stroke="#111" stroke-width="1.4"/><path d="M5.6 19.3 H10 L19 9.0 H20" fill="none" stroke="#f6f6f6" stroke-width="5.4" stroke-linecap="round"/><path d="M5.6 9.0 H10 L19 19.8 H20" fill="none" stroke="#111" stroke-width="7.8" stroke-linecap="round"/><path d="M19.6 14.200000000000001 L26 19.8 L19.6 25.4 Z" fill="#f6f6f6" stroke="#111" stroke-width="1.4"/><path d="M5.6 9.0 H10 L19 19.8 H20" fill="none" stroke="#f6f6f6" stroke-width="5.4" stroke-linecap="round"/></g></svg><div class="cb" style="left:347.5px;top:541px;width:87px;height:27px"><div class="cbt">Heave</div><div class="cbb" style="width:22.5px"><i></i></div></div><div class="cb" style="left:438px;top:541px;width:65px;height:27px"><div class="cbt">20</div><div class="cbb" style="width:22.5px"><i></i></div></div><div class="r" style="left:508px;top:541px;width:22.5px;height:27px;background:#1b8fd9;"></div><svg class="r" style="left:508px;top:541px;" width="23" height="27" viewBox="0 0 23 27"><path d="M9.2 5.5 H13.8 V11.2 H19.5 V15.8 H13.8 V21.5 H9.2 V15.8 H3.5 V11.2 H9.2 Z" fill="#fff" stroke="#114" stroke-width="0.6"/></svg><div class="r" style="left:316px;top:576px;width:28px;height:27px;background:#516151;"></div><svg class="r" style="left:316px;top:576px;" width="28" height="27" viewBox="0 0 28 27"><path d="M3 6.3999999999999995 H19 V3.8499999999999996 L25.5 9.1 L19 14.35 V11.8 H3 Z M3 17.2 H19 V14.649999999999999 L25.5 19.9 L19 25.15 V22.599999999999998 H3 Z" fill="#f6f6f6" stroke="#111" stroke-width="1.3" stroke-linejoin="round"/></svg><div class="cb" style="left:347.5px;top:576px;width:87px;height:27px"><div class="cbt">Surge</div><div class="cbb" style="width:22.5px"><i></i></div></div><div class="cb" style="left:438px;top:576px;width:65px;height:27px"><div class="cbt">5</div><div class="cbb" style="width:22.5px"><i></i></div></div><div class="r" style="left:508px;top:576px;width:22.5px;height:27px;background:#5e5e60;"></div><svg class="r" style="left:508px;top:576px;" width="23" height="27" viewBox="0 0 23 27"><rect x="3.6" y="11.2" width="15.4" height="5.2" rx="1" fill="#fff" stroke="#222" stroke-width="0.6"/></svg><div class="r" style="left:316px;top:611px;width:28px;height:27px;background:#516151;"></div><svg class="r" style="left:316px;top:611px;" width="28" height="27" viewBox="0 0 28 27"><path d="M3 6.3999999999999995 H19 V3.8499999999999996 L25.5 9.1 L19 14.35 V11.8 H3 Z M3 17.2 H19 V14.649999999999999 L25.5 19.9 L19 25.15 V22.599999999999998 H3 Z" fill="#f6f6f6" stroke="#111" stroke-width="1.3" stroke-linejoin="round"/></svg><div class="cb" style="left:347.5px;top:611px;width:87px;height:27px"><div class="cbt">-</div><div class="cbb" style="width:22.5px"><i></i></div></div><div class="cb" style="left:438px;top:611px;width:65px;height:27px"><div class="cbt">-</div><div class="cbb" style="width:22.5px"><i></i></div></div><div class="r" style="left:508px;top:611px;width:22.5px;height:27px;background:#5e5e60;"></div><svg class="r" style="left:508px;top:611px;" width="23" height="27" viewBox="0 0 23 27"><rect x="3.6" y="11.2" width="15.4" height="5.2" rx="1" fill="#fff" stroke="#222" stroke-width="0.6"/></svg><div class="r" style="left:316px;top:646px;width:28px;height:27px;background:#516151;"></div><svg class="r" style="left:316px;top:646px;" width="28" height="27" viewBox="0 0 28 27"><path d="M3 6.3999999999999995 H19 V3.8499999999999996 L25.5 9.1 L19 14.35 V11.8 H3 Z M3 17.2 H19 V14.649999999999999 L25.5 19.9 L19 25.15 V22.599999999999998 H3 Z" fill="#f6f6f6" stroke="#111" stroke-width="1.3" stroke-linejoin="round"/></svg><div class="cb" style="left:347.5px;top:646px;width:87px;height:27px"><div class="cbt">-</div><div class="cbb" style="width:22.5px"><i></i></div></div><div class="cb" style="left:438px;top:646px;width:65px;height:27px"><div class="cbt">-</div><div class="cbb" style="width:22.5px"><i></i></div></div><div class="r" style="left:508px;top:646px;width:22.5px;height:27px;background:#5e5e60;"></div><svg class="r" style="left:508px;top:646px;" width="23" height="27" viewBox="0 0 23 27"><rect x="3.6" y="11.2" width="15.4" height="5.2" rx="1" fill="#fff" stroke="#222" stroke-width="0.6"/></svg><div class="r" style="left:316px;top:681px;width:28px;height:27px;background:#516151;"></div><svg class="r" style="left:316px;top:681px;" width="28" height="27" viewBox="0 0 28 27"><path d="M3 6.3999999999999995 H19 V3.8499999999999996 L25.5 9.1 L19 14.35 V11.8 H3 Z M3 17.2 H19 V14.649999999999999 L25.5 19.9 L19 25.15 V22.599999999999998 H3 Z" fill="#f6f6f6" stroke="#111" stroke-width="1.3" stroke-linejoin="round"/></svg><div class="cb" style="left:347.5px;top:681px;width:87px;height:27px"><div class="cbt">-</div><div class="cbb" style="width:22.5px"><i></i></div></div><div class="cb" style="left:438px;top:681px;width:65px;height:27px"><div class="cbt">-</div><div class="cbb" style="width:22.5px"><i></i></div></div><div class="r" style="left:508px;top:681px;width:22.5px;height:27px;background:#5e5e60;"></div><svg class="r" style="left:508px;top:681px;" width="23" height="27" viewBox="0 0 23 27"><rect x="3.6" y="11.2" width="15.4" height="5.2" rx="1" fill="#fff" stroke="#222" stroke-width="0.6"/></svg><div class="r" style="left:301px;top:718.5px;width:244px;height:39.5px;background:transparent;box-sizing:border-box;border:2px solid #d0d0d0;border-radius:5px;"></div><div class="t" style="left:324.60px;top:730.19px;font-size:17.5px;line-height:17.5px;font-weight:bold;color:#f2f2f2;transform:scaleX(1.1206);transform-origin:0 0;-webkit-text-stroke:0.45px #f2f2f2;">Axis Total =</div><div class="t" style="left:462.64px;top:726.28px;font-size:22px;line-height:22px;font-weight:normal;color:#22e622;transform:scaleX(0.9629);transform-origin:0 0;-webkit-text-stroke:0.8px #22e622;">100</div><div class="t" style="left:650.14px;top:376.95px;font-size:20.5px;line-height:20.5px;font-weight:bold;color:#f2f2f2;transform:scaleX(1.0605);transform-origin:0 0;">ARG</div><div class="r" style="left:551px;top:402.5px;width:244px;height:318px;background:transparent;box-sizing:border-box;border:2px solid #d0d0d0;border-radius:5px;"></div><div class="t" style="left:566.03px;top:414.01px;font-size:17px;line-height:17px;font-weight:bold;color:#f2f2f2;transform:scaleX(1.0652);transform-origin:0 0;">Dir</div><div class="t" style="left:615.42px;top:414.01px;font-size:17px;line-height:17px;font-weight:bold;color:#f2f2f2;transform:scaleX(1.0778);transform-origin:0 0;">Force</div><div class="t" style="left:712.00px;top:414.01px;font-size:17px;line-height:17px;font-weight:bold;color:#f2f2f2;transform:scaleX(0.9867);transform-origin:0 0;">%</div><div class="t" style="left:754.47px;top:414.01px;font-size:17px;line-height:17px;font-weight:bold;color:#f2f2f2;transform:scaleX(1.1300);transform-origin:0 0;">Flt</div><div class="r" style="left:566px;top:436px;width:28px;height:27px;background:#516151;"></div><svg class="r" style="left:566px;top:436px;" width="28" height="27" viewBox="0 0 28 27"><path d="M3 6.3999999999999995 H19 V3.8499999999999996 L25.5 9.1 L19 14.35 V11.8 H3 Z M3 17.2 H19 V14.649999999999999 L25.5 19.9 L19 25.15 V22.599999999999998 H3 Z" fill="#f6f6f6" stroke="#111" stroke-width="1.3" stroke-linejoin="round"/></svg><div class="cb" style="left:597.5px;top:436px;width:87px;height:27px"><div class="cbt">Roll</div><div class="cbb" style="width:22.5px"><i></i></div></div><div class="cb" style="left:688px;top:436px;width:65px;height:27px"><div class="cbt">35</div><div class="cbb" style="width:22.5px"><i></i></div></div><div class="r" style="left:758px;top:436px;width:22.5px;height:27px;background:#5e5e60;"></div><svg class="r" style="left:758px;top:436px;" width="23" height="27" viewBox="0 0 23 27"><rect x="3.6" y="11.2" width="15.4" height="5.2" rx="1" fill="#fff" stroke="#222" stroke-width="0.6"/></svg><div class="r" style="left:566px;top:471px;width:28px;height:27px;background:#516151;"></div><svg class="r" style="left:566px;top:471px;" width="28" height="27" viewBox="0 0 28 27"><path d="M3 6.3999999999999995 H19 V3.8499999999999996 L25.5 9.1 L19 14.35 V11.8 H3 Z M3 17.2 H19 V14.649999999999999 L25.5 19.9 L19 25.15 V22.599999999999998 H3 Z" fill="#f6f6f6" stroke="#111" stroke-width="1.3" stroke-linejoin="round"/></svg><div class="cb" style="left:597.5px;top:471px;width:87px;height:27px"><div class="cbt">Pitch</div><div class="cbb" style="width:22.5px"><i></i></div></div><div class="cb" style="left:688px;top:471px;width:65px;height:27px"><div class="cbt">35</div><div class="cbb" style="width:22.5px"><i></i></div></div><div class="r" style="left:758px;top:471px;width:22.5px;height:27px;background:#5e5e60;"></div><svg class="r" style="left:758px;top:471px;" width="23" height="27" viewBox="0 0 23 27"><rect x="3.6" y="11.2" width="15.4" height="5.2" rx="1" fill="#fff" stroke="#222" stroke-width="0.6"/></svg><div class="r" style="left:566px;top:506px;width:28px;height:27px;background:#5f4f51;"></div><svg class="r" style="left:566px;top:506px;" width="28" height="27" viewBox="0 0 28 27"><g stroke-linejoin="round"><path d="M5.6 19.3 H10 L19 9.0 H20" fill="none" stroke="#111" stroke-width="7.8" stroke-linecap="round"/><path d="M19.6 3.4000000000000004 L26 9.0 L19.6 14.6 Z" fill="#f6f6f6" stroke="#111" stroke-width="1.4"/><path d="M5.6 19.3 H10 L19 9.0 H20" fill="none" stroke="#f6f6f6" stroke-width="5.4" stroke-linecap="round"/><path d="M5.6 9.0 H10 L19 19.8 H20" fill="none" stroke="#111" stroke-width="7.8" stroke-linecap="round"/><path d="M19.6 14.200000000000001 L26 19.8 L19.6 25.4 Z" fill="#f6f6f6" stroke="#111" stroke-width="1.4"/><path d="M5.6 9.0 H10 L19 19.8 H20" fill="none" stroke="#f6f6f6" stroke-width="5.4" stroke-linecap="round"/></g></svg><div class="cb" style="left:597.5px;top:506px;width:87px;height:27px"><div class="cbt">Sway</div><div class="cbb" style="width:22.5px"><i></i></div></div><div class="cb" style="left:688px;top:506px;width:65px;height:27px"><div class="cbt">5</div><div class="cbb" style="width:22.5px"><i></i></div></div><div class="r" style="left:758px;top:506px;width:22.5px;height:27px;background:#1b8fd9;"></div><svg class="r" style="left:758px;top:506px;" width="23" height="27" viewBox="0 0 23 27"><path d="M9.2 5.5 H13.8 V11.2 H19.5 V15.8 H13.8 V21.5 H9.2 V15.8 H3.5 V11.2 H9.2 Z" fill="#fff" stroke="#114" stroke-width="0.6"/></svg><div class="r" style="left:566px;top:541px;width:28px;height:27px;background:#5f4f51;"></div><svg class="r" style="left:566px;top:541px;" width="28" height="27" viewBox="0 0 28 27"><g stroke-linejoin="round"><path d="M5.6 19.3 H10 L19 9.0 H20" fill="none" stroke="#111" stroke-width="7.8" stroke-linecap="round"/><path d="M19.6 3.4000000000000004 L26 9.0 L19.6 14.6 Z" fill="#f6f6f6" stroke="#111" stroke-width="1.4"/><path d="M5.6 19.3 H10 L19 9.0 H20" fill="none" stroke="#f6f6f6" stroke-width="5.4" stroke-linecap="round"/><path d="M5.6 9.0 H10 L19 19.8 H20" fill="none" stroke="#111" stroke-width="7.8" stroke-linecap="round"/><path d="M19.6 14.200000000000001 L26 19.8 L19.6 25.4 Z" fill="#f6f6f6" stroke="#111" stroke-width="1.4"/><path d="M5.6 9.0 H10 L19 19.8 H20" fill="none" stroke="#f6f6f6" stroke-width="5.4" stroke-linecap="round"/></g></svg><div class="cb" style="left:597.5px;top:541px;width:87px;height:27px"><div class="cbt">Heave</div><div class="cbb" style="width:22.5px"><i></i></div></div><div class="cb" style="left:688px;top:541px;width:65px;height:27px"><div class="cbt">20</div><div class="cbb" style="width:22.5px"><i></i></div></div><div class="r" style="left:758px;top:541px;width:22.5px;height:27px;background:#1b8fd9;"></div><svg class="r" style="left:758px;top:541px;" width="23" height="27" viewBox="0 0 23 27"><path d="M9.2 5.5 H13.8 V11.2 H19.5 V15.8 H13.8 V21.5 H9.2 V15.8 H3.5 V11.2 H9.2 Z" fill="#fff" stroke="#114" stroke-width="0.6"/></svg><div class="r" style="left:566px;top:576px;width:28px;height:27px;background:#5f4f51;"></div><svg class="r" style="left:566px;top:576px;" width="28" height="27" viewBox="0 0 28 27"><g stroke-linejoin="round"><path d="M5.6 19.3 H10 L19 9.0 H20" fill="none" stroke="#111" stroke-width="7.8" stroke-linecap="round"/><path d="M19.6 3.4000000000000004 L26 9.0 L19.6 14.6 Z" fill="#f6f6f6" stroke="#111" stroke-width="1.4"/><path d="M5.6 19.3 H10 L19 9.0 H20" fill="none" stroke="#f6f6f6" stroke-width="5.4" stroke-linecap="round"/><path d="M5.6 9.0 H10 L19 19.8 H20" fill="none" stroke="#111" stroke-width="7.8" stroke-linecap="round"/><path d="M19.6 14.200000000000001 L26 19.8 L19.6 25.4 Z" fill="#f6f6f6" stroke="#111" stroke-width="1.4"/><path d="M5.6 9.0 H10 L19 19.8 H20" fill="none" stroke="#f6f6f6" stroke-width="5.4" stroke-linecap="round"/></g></svg><div class="cb" style="left:597.5px;top:576px;width:87px;height:27px"><div class="cbt">Surge</div><div class="cbb" style="width:22.5px"><i></i></div></div><div class="cb" style="left:688px;top:576px;width:65px;height:27px"><div class="cbt">5</div><div class="cbb" style="width:22.5px"><i></i></div></div><div class="r" style="left:758px;top:576px;width:22.5px;height:27px;background:#5e5e60;"></div><svg class="r" style="left:758px;top:576px;" width="23" height="27" viewBox="0 0 23 27"><rect x="3.6" y="11.2" width="15.4" height="5.2" rx="1" fill="#fff" stroke="#222" stroke-width="0.6"/></svg><div class="r" style="left:566px;top:611px;width:28px;height:27px;background:#516151;"></div><svg class="r" style="left:566px;top:611px;" width="28" height="27" viewBox="0 0 28 27"><path d="M3 6.3999999999999995 H19 V3.8499999999999996 L25.5 9.1 L19 14.35 V11.8 H3 Z M3 17.2 H19 V14.649999999999999 L25.5 19.9 L19 25.15 V22.599999999999998 H3 Z" fill="#f6f6f6" stroke="#111" stroke-width="1.3" stroke-linejoin="round"/></svg><div class="cb" style="left:597.5px;top:611px;width:87px;height:27px"><div class="cbt">-</div><div class="cbb" style="width:22.5px"><i></i></div></div><div class="cb" style="left:688px;top:611px;width:65px;height:27px"><div class="cbt">-</div><div class="cbb" style="width:22.5px"><i></i></div></div><div class="r" style="left:758px;top:611px;width:22.5px;height:27px;background:#5e5e60;"></div><svg class="r" style="left:758px;top:611px;" width="23" height="27" viewBox="0 0 23 27"><rect x="3.6" y="11.2" width="15.4" height="5.2" rx="1" fill="#fff" stroke="#222" stroke-width="0.6"/></svg><div class="r" style="left:566px;top:646px;width:28px;height:27px;background:#516151;"></div><svg class="r" style="left:566px;top:646px;" width="28" height="27" viewBox="0 0 28 27"><path d="M3 6.3999999999999995 H19 V3.8499999999999996 L25.5 9.1 L19 14.35 V11.8 H3 Z M3 17.2 H19 V14.649999999999999 L25.5 19.9 L19 25.15 V22.599999999999998 H3 Z" fill="#f6f6f6" stroke="#111" stroke-width="1.3" stroke-linejoin="round"/></svg><div class="cb" style="left:597.5px;top:646px;width:87px;height:27px"><div class="cbt">-</div><div class="cbb" style="width:22.5px"><i></i></div></div><div class="cb" style="left:688px;top:646px;width:65px;height:27px"><div class="cbt">-</div><div class="cbb" style="width:22.5px"><i></i></div></div><div class="r" style="left:758px;top:646px;width:22.5px;height:27px;background:#5e5e60;"></div><svg class="r" style="left:758px;top:646px;" width="23" height="27" viewBox="0 0 23 27"><rect x="3.6" y="11.2" width="15.4" height="5.2" rx="1" fill="#fff" stroke="#222" stroke-width="0.6"/></svg><div class="r" style="left:566px;top:681px;width:28px;height:27px;background:#516151;"></div><svg class="r" style="left:566px;top:681px;" width="28" height="27" viewBox="0 0 28 27"><path d="M3 6.3999999999999995 H19 V3.8499999999999996 L25.5 9.1 L19 14.35 V11.8 H3 Z M3 17.2 H19 V14.649999999999999 L25.5 19.9 L19 25.15 V22.599999999999998 H3 Z" fill="#f6f6f6" stroke="#111" stroke-width="1.3" stroke-linejoin="round"/></svg><div class="cb" style="left:597.5px;top:681px;width:87px;height:27px"><div class="cbt">-</div><div class="cbb" style="width:22.5px"><i></i></div></div><div class="cb" style="left:688px;top:681px;width:65px;height:27px"><div class="cbt">-</div><div class="cbb" style="width:22.5px"><i></i></div></div><div class="r" style="left:758px;top:681px;width:22.5px;height:27px;background:#5e5e60;"></div><svg class="r" style="left:758px;top:681px;" width="23" height="27" viewBox="0 0 23 27"><rect x="3.6" y="11.2" width="15.4" height="5.2" rx="1" fill="#fff" stroke="#222" stroke-width="0.6"/></svg><div class="r" style="left:551px;top:718.5px;width:244px;height:39.5px;background:transparent;box-sizing:border-box;border:2px solid #d0d0d0;border-radius:5px;"></div><div class="t" style="left:574.60px;top:730.19px;font-size:17.5px;line-height:17.5px;font-weight:bold;color:#f2f2f2;transform:scaleX(1.1206);transform-origin:0 0;-webkit-text-stroke:0.45px #f2f2f2;">Axis Total =</div><div class="t" style="left:712.64px;top:726.28px;font-size:22px;line-height:22px;font-weight:normal;color:#22e622;transform:scaleX(0.9629);transform-origin:0 0;-webkit-text-stroke:0.8px #22e622;">100</div><div class="t" style="left:901.05px;top:376.95px;font-size:20.5px;line-height:20.5px;font-weight:bold;color:#f2f2f2;transform:scaleX(1.0200);transform-origin:0 0;">ARD</div><div class="r" style="left:802px;top:402.5px;width:244px;height:318px;background:transparent;box-sizing:border-box;border:2px solid #d0d0d0;border-radius:5px;"></div><div class="t" style="left:817.03px;top:414.01px;font-size:17px;line-height:17px;font-weight:bold;color:#f2f2f2;transform:scaleX(1.0652);transform-origin:0 0;">Dir</div><div class="t" style="left:866.42px;top:414.01px;font-size:17px;line-height:17px;font-weight:bold;color:#f2f2f2;transform:scaleX(1.0778);transform-origin:0 0;">Force</div><div class="t" style="left:963.00px;top:414.01px;font-size:17px;line-height:17px;font-weight:bold;color:#f2f2f2;transform:scaleX(0.9867);transform-origin:0 0;">%</div><div class="t" style="left:1005.47px;top:414.01px;font-size:17px;line-height:17px;font-weight:bold;color:#f2f2f2;transform:scaleX(1.1300);transform-origin:0 0;">Flt</div><div class="r" style="left:817px;top:436px;width:28px;height:27px;background:#5f4f51;"></div><svg class="r" style="left:817px;top:436px;" width="28" height="27" viewBox="0 0 28 27"><g stroke-linejoin="round"><path d="M5.6 19.3 H10 L19 9.0 H20" fill="none" stroke="#111" stroke-width="7.8" stroke-linecap="round"/><path d="M19.6 3.4000000000000004 L26 9.0 L19.6 14.6 Z" fill="#f6f6f6" stroke="#111" stroke-width="1.4"/><path d="M5.6 19.3 H10 L19 9.0 H20" fill="none" stroke="#f6f6f6" stroke-width="5.4" stroke-linecap="round"/><path d="M5.6 9.0 H10 L19 19.8 H20" fill="none" stroke="#111" stroke-width="7.8" stroke-linecap="round"/><path d="M19.6 14.200000000000001 L26 19.8 L19.6 25.4 Z" fill="#f6f6f6" stroke="#111" stroke-width="1.4"/><path d="M5.6 9.0 H10 L19 19.8 H20" fill="none" stroke="#f6f6f6" stroke-width="5.4" stroke-linecap="round"/></g></svg><div class="cb" style="left:848.5px;top:436px;width:87px;height:27px"><div class="cbt">Roll</div><div class="cbb" style="width:22.5px"><i></i></div></div><div class="cb" style="left:939px;top:436px;width:65px;height:27px"><div class="cbt">35</div><div class="cbb" style="width:22.5px"><i></i></div></div><div class="r" style="left:1009px;top:436px;width:22.5px;height:27px;background:#5e5e60;"></div><svg class="r" style="left:1009px;top:436px;" width="23" height="27" viewBox="0 0 23 27"><rect x="3.6" y="11.2" width="15.4" height="5.2" rx="1" fill="#fff" stroke="#222" stroke-width="0.6"/></svg><div class="r" style="left:817px;top:471px;width:28px;height:27px;background:#516151;"></div><svg class="r" style="left:817px;top:471px;" width="28" height="27" viewBox="0 0 28 27"><path d="M3 6.3999999999999995 H19 V3.8499999999999996 L25.5 9.1 L19 14.35 V11.8 H3 Z M3 17.2 H19 V14.649999999999999 L25.5 19.9 L19 25.15 V22.599999999999998 H3 Z" fill="#f6f6f6" stroke="#111" stroke-width="1.3" stroke-linejoin="round"/></svg><div class="cb" style="left:848.5px;top:471px;width:87px;height:27px"><div class="cbt">Pitch</div><div class="cbb" style="width:22.5px"><i></i></div></div><div class="cb" style="left:939px;top:471px;width:65px;height:27px"><div class="cbt">35</div><div class="cbb" style="width:22.5px"><i></i></div></div><div class="r" style="left:1009px;top:471px;width:22.5px;height:27px;background:#5e5e60;"></div><svg class="r" style="left:1009px;top:471px;" width="23" height="27" viewBox="0 0 23 27"><rect x="3.6" y="11.2" width="15.4" height="5.2" rx="1" fill="#fff" stroke="#222" stroke-width="0.6"/></svg><div class="r" style="left:817px;top:506px;width:28px;height:27px;background:#516151;"></div><svg class="r" style="left:817px;top:506px;" width="28" height="27" viewBox="0 0 28 27"><path d="M3 6.3999999999999995 H19 V3.8499999999999996 L25.5 9.1 L19 14.35 V11.8 H3 Z M3 17.2 H19 V14.649999999999999 L25.5 19.9 L19 25.15 V22.599999999999998 H3 Z" fill="#f6f6f6" stroke="#111" stroke-width="1.3" stroke-linejoin="round"/></svg><div class="cb" style="left:848.5px;top:506px;width:87px;height:27px"><div class="cbt">Sway</div><div class="cbb" style="width:22.5px"><i></i></div></div><div class="cb" style="left:939px;top:506px;width:65px;height:27px"><div class="cbt">5</div><div class="cbb" style="width:22.5px"><i></i></div></div><div class="r" style="left:1009px;top:506px;width:22.5px;height:27px;background:#1b8fd9;"></div><svg class="r" style="left:1009px;top:506px;" width="23" height="27" viewBox="0 0 23 27"><path d="M9.2 5.5 H13.8 V11.2 H19.5 V15.8 H13.8 V21.5 H9.2 V15.8 H3.5 V11.2 H9.2 Z" fill="#fff" stroke="#114" stroke-width="0.6"/></svg><div class="r" style="left:817px;top:541px;width:28px;height:27px;background:#5f4f51;"></div><svg class="r" style="left:817px;top:541px;" width="28" height="27" viewBox="0 0 28 27"><g stroke-linejoin="round"><path d="M5.6 19.3 H10 L19 9.0 H20" fill="none" stroke="#111" stroke-width="7.8" stroke-linecap="round"/><path d="M19.6 3.4000000000000004 L26 9.0 L19.6 14.6 Z" fill="#f6f6f6" stroke="#111" stroke-width="1.4"/><path d="M5.6 19.3 H10 L19 9.0 H20" fill="none" stroke="#f6f6f6" stroke-width="5.4" stroke-linecap="round"/><path d="M5.6 9.0 H10 L19 19.8 H20" fill="none" stroke="#111" stroke-width="7.8" stroke-linecap="round"/><path d="M19.6 14.200000000000001 L26 19.8 L19.6 25.4 Z" fill="#f6f6f6" stroke="#111" stroke-width="1.4"/><path d="M5.6 9.0 H10 L19 19.8 H20" fill="none" stroke="#f6f6f6" stroke-width="5.4" stroke-linecap="round"/></g></svg><div class="cb" style="left:848.5px;top:541px;width:87px;height:27px"><div class="cbt">Heave</div><div class="cbb" style="width:22.5px"><i></i></div></div><div class="cb" style="left:939px;top:541px;width:65px;height:27px"><div class="cbt">20</div><div class="cbb" style="width:22.5px"><i></i></div></div><div class="r" style="left:1009px;top:541px;width:22.5px;height:27px;background:#1b8fd9;"></div><svg class="r" style="left:1009px;top:541px;" width="23" height="27" viewBox="0 0 23 27"><path d="M9.2 5.5 H13.8 V11.2 H19.5 V15.8 H13.8 V21.5 H9.2 V15.8 H3.5 V11.2 H9.2 Z" fill="#fff" stroke="#114" stroke-width="0.6"/></svg><div class="r" style="left:817px;top:576px;width:28px;height:27px;background:#5f4f51;"></div><svg class="r" style="left:817px;top:576px;" width="28" height="27" viewBox="0 0 28 27"><g stroke-linejoin="round"><path d="M5.6 19.3 H10 L19 9.0 H20" fill="none" stroke="#111" stroke-width="7.8" stroke-linecap="round"/><path d="M19.6 3.4000000000000004 L26 9.0 L19.6 14.6 Z" fill="#f6f6f6" stroke="#111" stroke-width="1.4"/><path d="M5.6 19.3 H10 L19 9.0 H20" fill="none" stroke="#f6f6f6" stroke-width="5.4" stroke-linecap="round"/><path d="M5.6 9.0 H10 L19 19.8 H20" fill="none" stroke="#111" stroke-width="7.8" stroke-linecap="round"/><path d="M19.6 14.200000000000001 L26 19.8 L19.6 25.4 Z" fill="#f6f6f6" stroke="#111" stroke-width="1.4"/><path d="M5.6 9.0 H10 L19 19.8 H20" fill="none" stroke="#f6f6f6" stroke-width="5.4" stroke-linecap="round"/></g></svg><div class="cb" style="left:848.5px;top:576px;width:87px;height:27px"><div class="cbt">Surge</div><div class="cbb" style="width:22.5px"><i></i></div></div><div class="cb" style="left:939px;top:576px;width:65px;height:27px"><div class="cbt">5</div><div class="cbb" style="width:22.5px"><i></i></div></div><div class="r" style="left:1009px;top:576px;width:22.5px;height:27px;background:#5e5e60;"></div><svg class="r" style="left:1009px;top:576px;" width="23" height="27" viewBox="0 0 23 27"><rect x="3.6" y="11.2" width="15.4" height="5.2" rx="1" fill="#fff" stroke="#222" stroke-width="0.6"/></svg><div class="r" style="left:817px;top:611px;width:28px;height:27px;background:#516151;"></div><svg class="r" style="left:817px;top:611px;" width="28" height="27" viewBox="0 0 28 27"><path d="M3 6.3999999999999995 H19 V3.8499999999999996 L25.5 9.1 L19 14.35 V11.8 H3 Z M3 17.2 H19 V14.649999999999999 L25.5 19.9 L19 25.15 V22.599999999999998 H3 Z" fill="#f6f6f6" stroke="#111" stroke-width="1.3" stroke-linejoin="round"/></svg><div class="cb" style="left:848.5px;top:611px;width:87px;height:27px"><div class="cbt">-</div><div class="cbb" style="width:22.5px"><i></i></div></div><div class="cb" style="left:939px;top:611px;width:65px;height:27px"><div class="cbt">-</div><div class="cbb" style="width:22.5px"><i></i></div></div><div class="r" style="left:1009px;top:611px;width:22.5px;height:27px;background:#5e5e60;"></div><svg class="r" style="left:1009px;top:611px;" width="23" height="27" viewBox="0 0 23 27"><rect x="3.6" y="11.2" width="15.4" height="5.2" rx="1" fill="#fff" stroke="#222" stroke-width="0.6"/></svg><div class="r" style="left:817px;top:646px;width:28px;height:27px;background:#516151;"></div><svg class="r" style="left:817px;top:646px;" width="28" height="27" viewBox="0 0 28 27"><path d="M3 6.3999999999999995 H19 V3.8499999999999996 L25.5 9.1 L19 14.35 V11.8 H3 Z M3 17.2 H19 V14.649999999999999 L25.5 19.9 L19 25.15 V22.599999999999998 H3 Z" fill="#f6f6f6" stroke="#111" stroke-width="1.3" stroke-linejoin="round"/></svg><div class="cb" style="left:848.5px;top:646px;width:87px;height:27px"><div class="cbt">-</div><div class="cbb" style="width:22.5px"><i></i></div></div><div class="cb" style="left:939px;top:646px;width:65px;height:27px"><div class="cbt">-</div><div class="cbb" style="width:22.5px"><i></i></div></div><div class="r" style="left:1009px;top:646px;width:22.5px;height:27px;background:#5e5e60;"></div><svg class="r" style="left:1009px;top:646px;" width="23" height="27" viewBox="0 0 23 27"><rect x="3.6" y="11.2" width="15.4" height="5.2" rx="1" fill="#fff" stroke="#222" stroke-width="0.6"/></svg><div class="r" style="left:817px;top:681px;width:28px;height:27px;background:#516151;"></div><svg class="r" style="left:817px;top:681px;" width="28" height="27" viewBox="0 0 28 27"><path d="M3 6.3999999999999995 H19 V3.8499999999999996 L25.5 9.1 L19 14.35 V11.8 H3 Z M3 17.2 H19 V14.649999999999999 L25.5 19.9 L19 25.15 V22.599999999999998 H3 Z" fill="#f6f6f6" stroke="#111" stroke-width="1.3" stroke-linejoin="round"/></svg><div class="cb" style="left:848.5px;top:681px;width:87px;height:27px"><div class="cbt">-</div><div class="cbb" style="width:22.5px"><i></i></div></div><div class="cb" style="left:939px;top:681px;width:65px;height:27px"><div class="cbt">-</div><div class="cbb" style="width:22.5px"><i></i></div></div><div class="r" style="left:1009px;top:681px;width:22.5px;height:27px;background:#5e5e60;"></div><svg class="r" style="left:1009px;top:681px;" width="23" height="27" viewBox="0 0 23 27"><rect x="3.6" y="11.2" width="15.4" height="5.2" rx="1" fill="#fff" stroke="#222" stroke-width="0.6"/></svg><div class="r" style="left:802px;top:718.5px;width:244px;height:39.5px;background:transparent;box-sizing:border-box;border:2px solid #d0d0d0;border-radius:5px;"></div><div class="t" style="left:825.60px;top:730.19px;font-size:17.5px;line-height:17.5px;font-weight:bold;color:#f2f2f2;transform:scaleX(1.1206);transform-origin:0 0;-webkit-text-stroke:0.45px #f2f2f2;">Axis Total =</div><div class="t" style="left:963.64px;top:726.28px;font-size:22px;line-height:22px;font-weight:normal;color:#22e622;transform:scaleX(0.9629);transform-origin:0 0;-webkit-text-stroke:0.8px #22e622;">100</div><div class="t" style="left:1142.89px;top:376.95px;font-size:20.5px;line-height:20.5px;font-weight:bold;color:#f2f2f2;transform:scaleX(1.0200);transform-origin:0 0;">DRIFT</div><div class="r" style="left:1052px;top:402.5px;width:244px;height:318px;background:transparent;box-sizing:border-box;border:2px solid #d0d0d0;border-radius:5px;"></div><div class="t" style="left:1067.03px;top:414.01px;font-size:17px;line-height:17px;font-weight:bold;color:#f2f2f2;transform:scaleX(1.0652);transform-origin:0 0;">Dir</div><div class="t" style="left:1116.42px;top:414.01px;font-size:17px;line-height:17px;font-weight:bold;color:#f2f2f2;transform:scaleX(1.0778);transform-origin:0 0;">Force</div><div class="t" style="left:1213.00px;top:414.01px;font-size:17px;line-height:17px;font-weight:bold;color:#f2f2f2;transform:scaleX(0.9867);transform-origin:0 0;">%</div><div class="t" style="left:1255.47px;top:414.01px;font-size:17px;line-height:17px;font-weight:bold;color:#f2f2f2;transform:scaleX(1.1300);transform-origin:0 0;">Flt</div><div class="r" style="left:1067px;top:436px;width:28px;height:27px;background:#516151;"></div><svg class="r" style="left:1067px;top:436px;" width="28" height="27" viewBox="0 0 28 27"><path d="M3 6.3999999999999995 H19 V3.8499999999999996 L25.5 9.1 L19 14.35 V11.8 H3 Z M3 17.2 H19 V14.649999999999999 L25.5 19.9 L19 25.15 V22.599999999999998 H3 Z" fill="#f6f6f6" stroke="#111" stroke-width="1.3" stroke-linejoin="round"/></svg><div class="cb" style="left:1098.5px;top:436px;width:87px;height:27px"><div class="cbt">-</div><div class="cbb" style="width:22.5px"><i></i></div></div><div class="cb" style="left:1189px;top:436px;width:65px;height:27px"><div class="cbt">-</div><div class="cbb" style="width:22.5px"><i></i></div></div><div class="r" style="left:1259px;top:436px;width:22.5px;height:27px;background:#5e5e60;"></div><svg class="r" style="left:1259px;top:436px;" width="23" height="27" viewBox="0 0 23 27"><rect x="3.6" y="11.2" width="15.4" height="5.2" rx="1" fill="#fff" stroke="#222" stroke-width="0.6"/></svg><div class="r" style="left:1067px;top:471px;width:28px;height:27px;background:#516151;"></div><svg class="r" style="left:1067px;top:471px;" width="28" height="27" viewBox="0 0 28 27"><path d="M3 6.3999999999999995 H19 V3.8499999999999996 L25.5 9.1 L19 14.35 V11.8 H3 Z M3 17.2 H19 V14.649999999999999 L25.5 19.9 L19 25.15 V22.599999999999998 H3 Z" fill="#f6f6f6" stroke="#111" stroke-width="1.3" stroke-linejoin="round"/></svg><div class="cb" style="left:1098.5px;top:471px;width:87px;height:27px"><div class="cbt">-</div><div class="cbb" style="width:22.5px"><i></i></div></div><div class="cb" style="left:1189px;top:471px;width:65px;height:27px"><div class="cbt">-</div><div class="cbb" style="width:22.5px"><i></i></div></div><div class="r" style="left:1259px;top:471px;width:22.5px;height:27px;background:#5e5e60;"></div><svg class="r" style="left:1259px;top:471px;" width="23" height="27" viewBox="0 0 23 27"><rect x="3.6" y="11.2" width="15.4" height="5.2" rx="1" fill="#fff" stroke="#222" stroke-width="0.6"/></svg><div class="r" style="left:1067px;top:506px;width:28px;height:27px;background:#516151;"></div><svg class="r" style="left:1067px;top:506px;" width="28" height="27" viewBox="0 0 28 27"><path d="M3 6.3999999999999995 H19 V3.8499999999999996 L25.5 9.1 L19 14.35 V11.8 H3 Z M3 17.2 H19 V14.649999999999999 L25.5 19.9 L19 25.15 V22.599999999999998 H3 Z" fill="#f6f6f6" stroke="#111" stroke-width="1.3" stroke-linejoin="round"/></svg><div class="cb" style="left:1098.5px;top:506px;width:87px;height:27px"><div class="cbt">-</div><div class="cbb" style="width:22.5px"><i></i></div></div><div class="cb" style="left:1189px;top:506px;width:65px;height:27px"><div class="cbt">-</div><div class="cbb" style="width:22.5px"><i></i></div></div><div class="r" style="left:1259px;top:506px;width:22.5px;height:27px;background:#5e5e60;"></div><svg class="r" style="left:1259px;top:506px;" width="23" height="27" viewBox="0 0 23 27"><rect x="3.6" y="11.2" width="15.4" height="5.2" rx="1" fill="#fff" stroke="#222" stroke-width="0.6"/></svg><div class="r" style="left:1067px;top:541px;width:28px;height:27px;background:#516151;"></div><svg class="r" style="left:1067px;top:541px;" width="28" height="27" viewBox="0 0 28 27"><path d="M3 6.3999999999999995 H19 V3.8499999999999996 L25.5 9.1 L19 14.35 V11.8 H3 Z M3 17.2 H19 V14.649999999999999 L25.5 19.9 L19 25.15 V22.599999999999998 H3 Z" fill="#f6f6f6" stroke="#111" stroke-width="1.3" stroke-linejoin="round"/></svg><div class="cb" style="left:1098.5px;top:541px;width:87px;height:27px"><div class="cbt">-</div><div class="cbb" style="width:22.5px"><i></i></div></div><div class="cb" style="left:1189px;top:541px;width:65px;height:27px"><div class="cbt">-</div><div class="cbb" style="width:22.5px"><i></i></div></div><div class="r" style="left:1259px;top:541px;width:22.5px;height:27px;background:#5e5e60;"></div><svg class="r" style="left:1259px;top:541px;" width="23" height="27" viewBox="0 0 23 27"><rect x="3.6" y="11.2" width="15.4" height="5.2" rx="1" fill="#fff" stroke="#222" stroke-width="0.6"/></svg><div class="r" style="left:1067px;top:576px;width:28px;height:27px;background:#516151;"></div><svg class="r" style="left:1067px;top:576px;" width="28" height="27" viewBox="0 0 28 27"><path d="M3 6.3999999999999995 H19 V3.8499999999999996 L25.5 9.1 L19 14.35 V11.8 H3 Z M3 17.2 H19 V14.649999999999999 L25.5 19.9 L19 25.15 V22.599999999999998 H3 Z" fill="#f6f6f6" stroke="#111" stroke-width="1.3" stroke-linejoin="round"/></svg><div class="cb" style="left:1098.5px;top:576px;width:87px;height:27px"><div class="cbt">-</div><div class="cbb" style="width:22.5px"><i></i></div></div><div class="cb" style="left:1189px;top:576px;width:65px;height:27px"><div class="cbt">-</div><div class="cbb" style="width:22.5px"><i></i></div></div><div class="r" style="left:1259px;top:576px;width:22.5px;height:27px;background:#5e5e60;"></div><svg class="r" style="left:1259px;top:576px;" width="23" height="27" viewBox="0 0 23 27"><rect x="3.6" y="11.2" width="15.4" height="5.2" rx="1" fill="#fff" stroke="#222" stroke-width="0.6"/></svg><div class="r" style="left:1067px;top:611px;width:28px;height:27px;background:#516151;"></div><svg class="r" style="left:1067px;top:611px;" width="28" height="27" viewBox="0 0 28 27"><path d="M3 6.3999999999999995 H19 V3.8499999999999996 L25.5 9.1 L19 14.35 V11.8 H3 Z M3 17.2 H19 V14.649999999999999 L25.5 19.9 L19 25.15 V22.599999999999998 H3 Z" fill="#f6f6f6" stroke="#111" stroke-width="1.3" stroke-linejoin="round"/></svg><div class="cb" style="left:1098.5px;top:611px;width:87px;height:27px"><div class="cbt">-</div><div class="cbb" style="width:22.5px"><i></i></div></div><div class="cb" style="left:1189px;top:611px;width:65px;height:27px"><div class="cbt">-</div><div class="cbb" style="width:22.5px"><i></i></div></div><div class="r" style="left:1259px;top:611px;width:22.5px;height:27px;background:#5e5e60;"></div><svg class="r" style="left:1259px;top:611px;" width="23" height="27" viewBox="0 0 23 27"><rect x="3.6" y="11.2" width="15.4" height="5.2" rx="1" fill="#fff" stroke="#222" stroke-width="0.6"/></svg><div class="r" style="left:1067px;top:646px;width:28px;height:27px;background:#516151;"></div><svg class="r" style="left:1067px;top:646px;" width="28" height="27" viewBox="0 0 28 27"><path d="M3 6.3999999999999995 H19 V3.8499999999999996 L25.5 9.1 L19 14.35 V11.8 H3 Z M3 17.2 H19 V14.649999999999999 L25.5 19.9 L19 25.15 V22.599999999999998 H3 Z" fill="#f6f6f6" stroke="#111" stroke-width="1.3" stroke-linejoin="round"/></svg><div class="cb" style="left:1098.5px;top:646px;width:87px;height:27px"><div class="cbt">-</div><div class="cbb" style="width:22.5px"><i></i></div></div><div class="cb" style="left:1189px;top:646px;width:65px;height:27px"><div class="cbt">-</div><div class="cbb" style="width:22.5px"><i></i></div></div><div class="r" style="left:1259px;top:646px;width:22.5px;height:27px;background:#5e5e60;"></div><svg class="r" style="left:1259px;top:646px;" width="23" height="27" viewBox="0 0 23 27"><rect x="3.6" y="11.2" width="15.4" height="5.2" rx="1" fill="#fff" stroke="#222" stroke-width="0.6"/></svg><div class="r" style="left:1067px;top:681px;width:28px;height:27px;background:#516151;"></div><svg class="r" style="left:1067px;top:681px;" width="28" height="27" viewBox="0 0 28 27"><path d="M3 6.3999999999999995 H19 V3.8499999999999996 L25.5 9.1 L19 14.35 V11.8 H3 Z M3 17.2 H19 V14.649999999999999 L25.5 19.9 L19 25.15 V22.599999999999998 H3 Z" fill="#f6f6f6" stroke="#111" stroke-width="1.3" stroke-linejoin="round"/></svg><div class="cb" style="left:1098.5px;top:681px;width:87px;height:27px"><div class="cbt">-</div><div class="cbb" style="width:22.5px"><i></i></div></div><div class="cb" style="left:1189px;top:681px;width:65px;height:27px"><div class="cbt">-</div><div class="cbb" style="width:22.5px"><i></i></div></div><div class="r" style="left:1259px;top:681px;width:22.5px;height:27px;background:#5e5e60;"></div><svg class="r" style="left:1259px;top:681px;" width="23" height="27" viewBox="0 0 23 27"><rect x="3.6" y="11.2" width="15.4" height="5.2" rx="1" fill="#fff" stroke="#222" stroke-width="0.6"/></svg><div class="r" style="left:1052px;top:718.5px;width:244px;height:39.5px;background:transparent;box-sizing:border-box;border:2px solid #d0d0d0;border-radius:5px;"></div><div class="t" style="left:1075.60px;top:730.19px;font-size:17.5px;line-height:17.5px;font-weight:bold;color:#f2f2f2;transform:scaleX(1.1206);transform-origin:0 0;-webkit-text-stroke:0.45px #f2f2f2;">Axis Total =</div><div class="t" style="left:1224.25px;top:726.08px;font-size:22px;line-height:22px;font-weight:normal;color:#22e622;transform:scaleX(0.9955);transform-origin:0 0;-webkit-text-stroke:0.6px #22e622;">0</div><div class="t" style="left:1390.10px;top:376.95px;font-size:20.5px;line-height:20.5px;font-weight:bold;color:#f2f2f2;transform:scaleX(1.0015);transform-origin:0 0;">Axis6a</div><div class="r" style="left:1303px;top:402.5px;width:244px;height:318px;background:transparent;box-sizing:border-box;border:2px solid #d0d0d0;border-radius:5px;"></div><div class="t" style="left:1318.03px;top:414.01px;font-size:17px;line-height:17px;font-weight:bold;color:#f2f2f2;transform:scaleX(1.0652);transform-origin:0 0;">Dir</div><div class="t" style="left:1367.42px;top:414.01px;font-size:17px;line-height:17px;font-weight:bold;color:#f2f2f2;transform:scaleX(1.0778);transform-origin:0 0;">Force</div><div class="t" style="left:1464.00px;top:414.01px;font-size:17px;line-height:17px;font-weight:bold;color:#f2f2f2;transform:scaleX(0.9867);transform-origin:0 0;">%</div><div class="t" style="left:1506.47px;top:414.01px;font-size:17px;line-height:17px;font-weight:bold;color:#f2f2f2;transform:scaleX(1.1300);transform-origin:0 0;">Flt</div><div class="r" style="left:1318px;top:436px;width:28px;height:27px;background:#516151;"></div><svg class="r" style="left:1318px;top:436px;" width="28" height="27" viewBox="0 0 28 27"><path d="M3 6.3999999999999995 H19 V3.8499999999999996 L25.5 9.1 L19 14.35 V11.8 H3 Z M3 17.2 H19 V14.649999999999999 L25.5 19.9 L19 25.15 V22.599999999999998 H3 Z" fill="#f6f6f6" stroke="#111" stroke-width="1.3" stroke-linejoin="round"/></svg><div class="cb" style="left:1349.5px;top:436px;width:87px;height:27px"><div class="cbt">-</div><div class="cbb" style="width:22.5px"><i></i></div></div><div class="cb" style="left:1440px;top:436px;width:65px;height:27px"><div class="cbt">-</div><div class="cbb" style="width:22.5px"><i></i></div></div><div class="r" style="left:1510px;top:436px;width:22.5px;height:27px;background:#5e5e60;"></div><svg class="r" style="left:1510px;top:436px;" width="23" height="27" viewBox="0 0 23 27"><rect x="3.6" y="11.2" width="15.4" height="5.2" rx="1" fill="#fff" stroke="#222" stroke-width="0.6"/></svg><div class="r" style="left:1318px;top:471px;width:28px;height:27px;background:#516151;"></div><svg class="r" style="left:1318px;top:471px;" width="28" height="27" viewBox="0 0 28 27"><path d="M3 6.3999999999999995 H19 V3.8499999999999996 L25.5 9.1 L19 14.35 V11.8 H3 Z M3 17.2 H19 V14.649999999999999 L25.5 19.9 L19 25.15 V22.599999999999998 H3 Z" fill="#f6f6f6" stroke="#111" stroke-width="1.3" stroke-linejoin="round"/></svg><div class="cb" style="left:1349.5px;top:471px;width:87px;height:27px"><div class="cbt">-</div><div class="cbb" style="width:22.5px"><i></i></div></div><div class="cb" style="left:1440px;top:471px;width:65px;height:27px"><div class="cbt">-</div><div class="cbb" style="width:22.5px"><i></i></div></div><div class="r" style="left:1510px;top:471px;width:22.5px;height:27px;background:#5e5e60;"></div><svg class="r" style="left:1510px;top:471px;" width="23" height="27" viewBox="0 0 23 27"><rect x="3.6" y="11.2" width="15.4" height="5.2" rx="1" fill="#fff" stroke="#222" stroke-width="0.6"/></svg><div class="r" style="left:1318px;top:506px;width:28px;height:27px;background:#516151;"></div><svg class="r" style="left:1318px;top:506px;" width="28" height="27" viewBox="0 0 28 27"><path d="M3 6.3999999999999995 H19 V3.8499999999999996 L25.5 9.1 L19 14.35 V11.8 H3 Z M3 17.2 H19 V14.649999999999999 L25.5 19.9 L19 25.15 V22.599999999999998 H3 Z" fill="#f6f6f6" stroke="#111" stroke-width="1.3" stroke-linejoin="round"/></svg><div class="cb" style="left:1349.5px;top:506px;width:87px;height:27px"><div class="cbt">-</div><div class="cbb" style="width:22.5px"><i></i></div></div><div class="cb" style="left:1440px;top:506px;width:65px;height:27px"><div class="cbt">-</div><div class="cbb" style="width:22.5px"><i></i></div></div><div class="r" style="left:1510px;top:506px;width:22.5px;height:27px;background:#5e5e60;"></div><svg class="r" style="left:1510px;top:506px;" width="23" height="27" viewBox="0 0 23 27"><rect x="3.6" y="11.2" width="15.4" height="5.2" rx="1" fill="#fff" stroke="#222" stroke-width="0.6"/></svg><div class="r" style="left:1318px;top:541px;width:28px;height:27px;background:#516151;"></div><svg class="r" style="left:1318px;top:541px;" width="28" height="27" viewBox="0 0 28 27"><path d="M3 6.3999999999999995 H19 V3.8499999999999996 L25.5 9.1 L19 14.35 V11.8 H3 Z M3 17.2 H19 V14.649999999999999 L25.5 19.9 L19 25.15 V22.599999999999998 H3 Z" fill="#f6f6f6" stroke="#111" stroke-width="1.3" stroke-linejoin="round"/></svg><div class="cb" style="left:1349.5px;top:541px;width:87px;height:27px"><div class="cbt">-</div><div class="cbb" style="width:22.5px"><i></i></div></div><div class="cb" style="left:1440px;top:541px;width:65px;height:27px"><div class="cbt">-</div><div class="cbb" style="width:22.5px"><i></i></div></div><div class="r" style="left:1510px;top:541px;width:22.5px;height:27px;background:#5e5e60;"></div><svg class="r" style="left:1510px;top:541px;" width="23" height="27" viewBox="0 0 23 27"><rect x="3.6" y="11.2" width="15.4" height="5.2" rx="1" fill="#fff" stroke="#222" stroke-width="0.6"/></svg><div class="r" style="left:1318px;top:576px;width:28px;height:27px;background:#516151;"></div><svg class="r" style="left:1318px;top:576px;" width="28" height="27" viewBox="0 0 28 27"><path d="M3 6.3999999999999995 H19 V3.8499999999999996 L25.5 9.1 L19 14.35 V11.8 H3 Z M3 17.2 H19 V14.649999999999999 L25.5 19.9 L19 25.15 V22.599999999999998 H3 Z" fill="#f6f6f6" stroke="#111" stroke-width="1.3" stroke-linejoin="round"/></svg><div class="cb" style="left:1349.5px;top:576px;width:87px;height:27px"><div class="cbt">-</div><div class="cbb" style="width:22.5px"><i></i></div></div><div class="cb" style="left:1440px;top:576px;width:65px;height:27px"><div class="cbt">-</div><div class="cbb" style="width:22.5px"><i></i></div></div><div class="r" style="left:1510px;top:576px;width:22.5px;height:27px;background:#5e5e60;"></div><svg class="r" style="left:1510px;top:576px;" width="23" height="27" viewBox="0 0 23 27"><rect x="3.6" y="11.2" width="15.4" height="5.2" rx="1" fill="#fff" stroke="#222" stroke-width="0.6"/></svg><div class="r" style="left:1318px;top:611px;width:28px;height:27px;background:#516151;"></div><svg class="r" style="left:1318px;top:611px;" width="28" height="27" viewBox="0 0 28 27"><path d="M3 6.3999999999999995 H19 V3.8499999999999996 L25.5 9.1 L19 14.35 V11.8 H3 Z M3 17.2 H19 V14.649999999999999 L25.5 19.9 L19 25.15 V22.599999999999998 H3 Z" fill="#f6f6f6" stroke="#111" stroke-width="1.3" stroke-linejoin="round"/></svg><div class="cb" style="left:1349.5px;top:611px;width:87px;height:27px"><div class="cbt">-</div><div class="cbb" style="width:22.5px"><i></i></div></div><div class="cb" style="left:1440px;top:611px;width:65px;height:27px"><div class="cbt">-</div><div class="cbb" style="width:22.5px"><i></i></div></div><div class="r" style="left:1510px;top:611px;width:22.5px;height:27px;background:#5e5e60;"></div><svg class="r" style="left:1510px;top:611px;" width="23" height="27" viewBox="0 0 23 27"><rect x="3.6" y="11.2" width="15.4" height="5.2" rx="1" fill="#fff" stroke="#222" stroke-width="0.6"/></svg><div class="r" style="left:1318px;top:646px;width:28px;height:27px;background:#516151;"></div><svg class="r" style="left:1318px;top:646px;" width="28" height="27" viewBox="0 0 28 27"><path d="M3 6.3999999999999995 H19 V3.8499999999999996 L25.5 9.1 L19 14.35 V11.8 H3 Z M3 17.2 H19 V14.649999999999999 L25.5 19.9 L19 25.15 V22.599999999999998 H3 Z" fill="#f6f6f6" stroke="#111" stroke-width="1.3" stroke-linejoin="round"/></svg><div class="cb" style="left:1349.5px;top:646px;width:87px;height:27px"><div class="cbt">-</div><div class="cbb" style="width:22.5px"><i></i></div></div><div class="cb" style="left:1440px;top:646px;width:65px;height:27px"><div class="cbt">-</div><div class="cbb" style="width:22.5px"><i></i></div></div><div class="r" style="left:1510px;top:646px;width:22.5px;height:27px;background:#5e5e60;"></div><svg class="r" style="left:1510px;top:646px;" width="23" height="27" viewBox="0 0 23 27"><rect x="3.6" y="11.2" width="15.4" height="5.2" rx="1" fill="#fff" stroke="#222" stroke-width="0.6"/></svg><div class="r" style="left:1318px;top:681px;width:28px;height:27px;background:#516151;"></div><svg class="r" style="left:1318px;top:681px;" width="28" height="27" viewBox="0 0 28 27"><path d="M3 6.3999999999999995 H19 V3.8499999999999996 L25.5 9.1 L19 14.35 V11.8 H3 Z M3 17.2 H19 V14.649999999999999 L25.5 19.9 L19 25.15 V22.599999999999998 H3 Z" fill="#f6f6f6" stroke="#111" stroke-width="1.3" stroke-linejoin="round"/></svg><div class="cb" style="left:1349.5px;top:681px;width:87px;height:27px"><div class="cbt">-</div><div class="cbb" style="width:22.5px"><i></i></div></div><div class="cb" style="left:1440px;top:681px;width:65px;height:27px"><div class="cbt">-</div><div class="cbb" style="width:22.5px"><i></i></div></div><div class="r" style="left:1510px;top:681px;width:22.5px;height:27px;background:#5e5e60;"></div><svg class="r" style="left:1510px;top:681px;" width="23" height="27" viewBox="0 0 23 27"><rect x="3.6" y="11.2" width="15.4" height="5.2" rx="1" fill="#fff" stroke="#222" stroke-width="0.6"/></svg><div class="r" style="left:1303px;top:718.5px;width:244px;height:39.5px;background:transparent;box-sizing:border-box;border:2px solid #d0d0d0;border-radius:5px;"></div><div class="t" style="left:1326.60px;top:730.19px;font-size:17.5px;line-height:17.5px;font-weight:bold;color:#f2f2f2;transform:scaleX(1.1206);transform-origin:0 0;-webkit-text-stroke:0.45px #f2f2f2;">Axis Total =</div><div class="t" style="left:1475.25px;top:726.08px;font-size:22px;line-height:22px;font-weight:normal;color:#22e622;transform:scaleX(0.9955);transform-origin:0 0;-webkit-text-stroke:0.6px #22e622;">0</div><div class="r" style="left:0px;top:819.5px;width:1600px;height:52.5px;background:#222225;"></div><svg class="r" style="left:47px;top:837px;" width="26" height="22" viewBox="0 0 26 22"><path d="M4.5 1 H9.5 V13 H13 L7 21 L1 13 H4.5 Z" fill="#fff"/><path d="M16.5 21 H21.5 V9 H25 L19 1 L13 9 H16.5 Z" fill="#fff"/></svg><div class="t" style="left:80.21px;top:839.69px;font-size:17.5px;line-height:17.5px;font-weight:bold;color:#f0f0f0;transform:scaleX(1.0415);transform-origin:0 0;">Min/Max Tuning</div><div class="r" style="left:287px;top:837px;width:5px;height:21px;background:#fff;"></div><div class="r" style="left:296px;top:842px;width:5px;height:12px;background:#fff;"></div><div class="r" style="left:305px;top:837px;width:5px;height:21px;background:#fff;"></div><div class="t" style="left:320.21px;top:839.69px;font-size:17.5px;line-height:17.5px;font-weight:bold;color:#f0f0f0;transform:scaleX(1.0394);transform-origin:0 0;">Axis Limiting</div><svg class="r" style="left:496.5px;top:834.5px;" width="28" height="28" viewBox="0 0 28 28"><circle cx="14" cy="14" r="13.5" fill="#fff"/><path d="M9.5 7 H15 Q20 7 20 12 Q20 17 15 17 H13.5 V21.5 H9.5 Z M13.5 10.5 V13.5 H15 Q16.3 13.5 16.3 12 Q16.3 10.5 15 10.5 Z" fill="#222225"/></svg><div class="t" style="left:533.36px;top:839.69px;font-size:17.5px;line-height:17.5px;font-weight:bold;color:#f0f0f0;transform:scaleX(1.0400);transform-origin:0 0;">Parking Location</div><svg class="r" style="left:729.4px;top:832.5px;" width="32" height="32" viewBox="0 0 32 32"><polygon points="26.88,15.62 20.56,17.25 26.95,26.38 17.82,20.30 16.30,22.39 14.79,21.00 12.51,24.99 11.31,19.73 3.13,20.54 9.01,15.42 1.93,11.25 10.54,10.99 9.49,2.02 15.00,9.00 16.66,7.17 17.44,9.52 24.43,4.38 20.39,12.37 22.31,13.31 20.98,14.48" fill="#fff"/></svg><div class="t" style="left:765.21px;top:839.69px;font-size:17.5px;line-height:17.5px;font-weight:bold;color:#f0f0f0;transform:scaleX(1.0417);transform-origin:0 0;">Crash Detection</div><div class="t" style="left:1044.00px;top:837.92px;font-size:19px;line-height:19px;font-weight:bold;color:#fff;transform:scaleX(0.9993);transform-origin:0 0;">Profile Intensity</div><div class="r" style="left:1213px;top:847.3px;width:266.5px;height:4px;background:#1a9ae0;"></div><div class="r" style="left:1404px;top:834px;width:26px;height:26px;background:#d98008;border-radius:50%;"></div><div class="r" style="left:1504px;top:832px;width:61px;height:30.5px;background:#313035;box-sizing:border-box;border:1px solid #6a6a6e;"></div><div class="t" style="left:1518.94px;top:835.66px;font-size:24.5px;line-height:24.5px;font-weight:bold;color:#fff;transform:scaleX(1.0577);transform-origin:0 0;">77</div><div class="r" style="left:1597px;top:0px;width:1px;height:872px;background:#1a2a38;"></div><div class="r" style="left:1598px;top:0px;width:2px;height:872px;background:#2a8cc4;"></div></body></html>
